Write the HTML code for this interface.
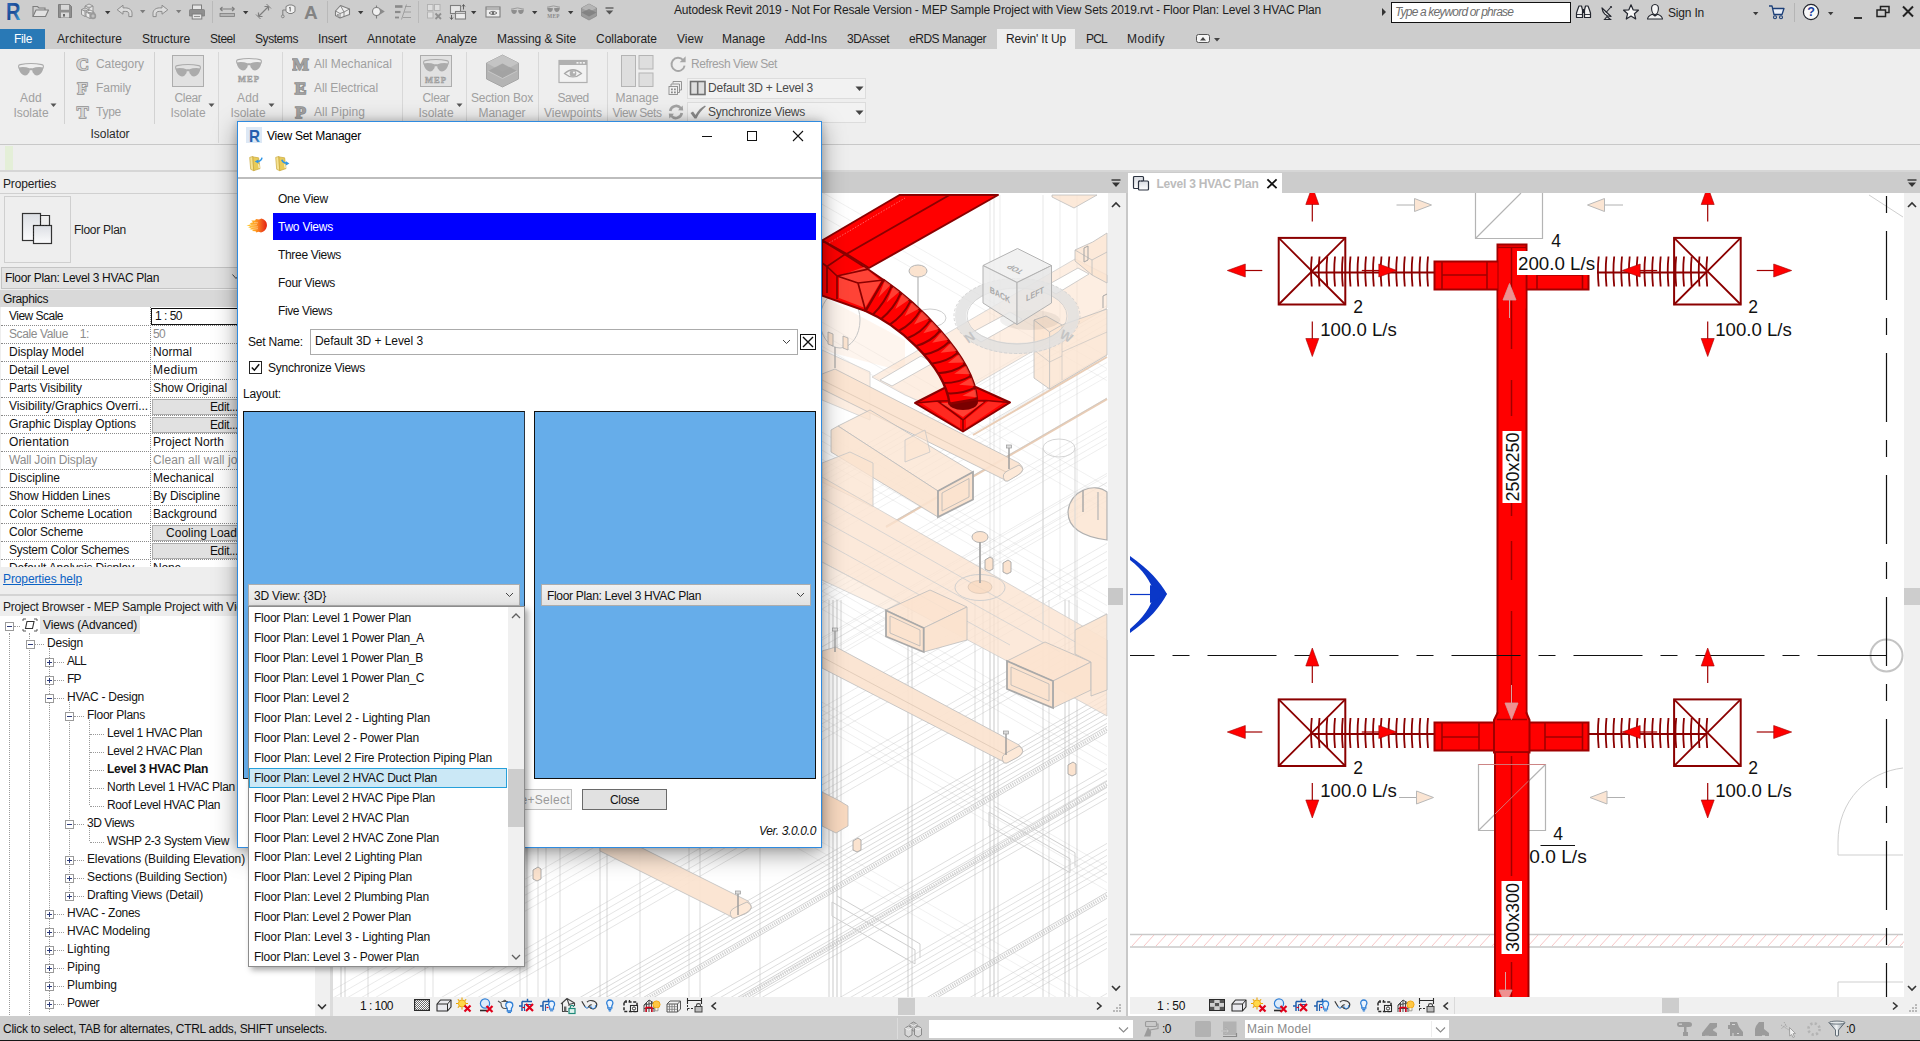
<!DOCTYPE html>
<html lang="en"><head><meta charset="utf-8"><title>Autodesk Revit 2019 - View Set Manager</title>
<style>
html,body{margin:0;padding:0;background:#cdcdcd;}
body{width:1920px;height:1041px;overflow:hidden;font-family:"Liberation Sans",sans-serif;font-size:12px;color:#1e1e1e;}
#app{position:relative;width:1920px;height:1041px;overflow:hidden;background:#cdcdcd;}
#app div,#app span.t,#app svg{position:absolute;box-sizing:border-box;}
span.t{white-space:pre;display:block;}
.dis{color:#a2a2a2;}
.clip{overflow:hidden;}

</style></head>
<body>
<div id="app">
<!-- p_chrome -->
<div style="left:0px;top:0px;width:1920px;height:49px;background:#cdcdcd;"></div>
<span class="t" style="top:2px;line-height:16px;height:16px;letter-spacing:-0.176px;left:674px;">Autodesk Revit 2019 - Not For Resale Version - MEP Sample Project with View Sets 2019.rvt - Floor Plan: Level 3 HVAC Plan</span>
<svg style="left:1380px;top:6px;" width="8" height="12" viewBox="0 0 8 12"><path d="M2 2 L6 6 L2 10 Z" fill="#333"/></svg>
<div style="left:1391px;top:2px;width:180px;height:21px;background:#fff;border:1px solid #111;"></div>
<span class="t" style="top:4px;line-height:16px;height:16px;color:#6e6e6e;font-style:italic;letter-spacing:-0.827px;left:1395px;">Type a keyword or phrase</span>
<span class="t" style="top:5px;line-height:16px;height:16px;color:#222;letter-spacing:-0.194px;left:1668px;">Sign In</span>
<div style="left:0px;top:29px;width:45px;height:20px;background:#2979b6;"></div>
<span class="t" style="top:31px;line-height:16px;height:16px;color:#fff;letter-spacing:-0.334px;left:14px;">File</span>
<div style="left:997px;top:29px;width:78px;height:21px;background:#eeeeee;"></div>
<span class="t" style="top:31px;line-height:16px;height:16px;color:#1e1e1e;letter-spacing:0.081px;left:57px;">Architecture</span>
<span class="t" style="top:31px;line-height:16px;height:16px;color:#1e1e1e;letter-spacing:-0.076px;left:142px;">Structure</span>
<span class="t" style="top:31px;line-height:16px;height:16px;color:#1e1e1e;letter-spacing:-0.470px;left:210px;">Steel</span>
<span class="t" style="top:31px;line-height:16px;height:16px;color:#1e1e1e;letter-spacing:-0.430px;left:255px;">Systems</span>
<span class="t" style="top:31px;line-height:16px;height:16px;color:#1e1e1e;letter-spacing:-0.169px;left:318px;">Insert</span>
<span class="t" style="top:31px;line-height:16px;height:16px;color:#1e1e1e;letter-spacing:0.120px;left:367px;">Annotate</span>
<span class="t" style="top:31px;line-height:16px;height:16px;color:#1e1e1e;letter-spacing:-0.242px;left:436px;">Analyze</span>
<span class="t" style="top:31px;line-height:16px;height:16px;color:#1e1e1e;letter-spacing:-0.074px;left:497px;">Massing &amp; Site</span>
<span class="t" style="top:31px;line-height:16px;height:16px;color:#1e1e1e;letter-spacing:-0.034px;left:596px;">Collaborate</span>
<span class="t" style="top:31px;line-height:16px;height:16px;color:#1e1e1e;letter-spacing:0.051px;left:677px;">View</span>
<span class="t" style="top:31px;line-height:16px;height:16px;color:#1e1e1e;letter-spacing:-0.061px;left:722px;">Manage</span>
<span class="t" style="top:31px;line-height:16px;height:16px;color:#1e1e1e;letter-spacing:0.092px;left:785px;">Add-Ins</span>
<span class="t" style="top:31px;line-height:16px;height:16px;color:#1e1e1e;letter-spacing:-0.479px;left:847px;">3DAsset</span>
<span class="t" style="top:31px;line-height:16px;height:16px;color:#1e1e1e;letter-spacing:-0.476px;left:909px;">eRDS Manager</span>
<span class="t" style="top:31px;line-height:16px;height:16px;color:#1e1e1e;letter-spacing:-0.782px;left:1086px;">PCL</span>
<span class="t" style="top:31px;line-height:16px;height:16px;color:#1e1e1e;letter-spacing:0.443px;left:1127px;">Modify</span>
<span class="t" style="top:31px;line-height:16px;height:16px;color:#1e1e1e;letter-spacing:-0.137px;left:1006px;">Revin' It Up</span>
<svg style="left:1195px;top:33px;" width="30" height="12" viewBox="0 0 30 12"><rect x="1.5" y="1.5" width="13" height="8" rx="2" fill="#f4f4f4" stroke="#555"/><path d="M5 7.5 L8 4 L11 7.5 Z" fill="#444"/><path d="M19 5 L25 5 L22 8.5 Z" fill="#444"/></svg>
<!-- p_qat -->
<svg style="left:5px;top:2px;" width="18" height="20" viewBox="0 0 18 20"><defs><linearGradient id="rlg" x1="0" y1="0" x2="1" y2="1"><stop offset="0" stop-color="#2f6fc0"/><stop offset="0.5" stop-color="#1a4a94"/><stop offset="1" stop-color="#45b6ec"/></linearGradient></defs><text x="1" y="18.2" font-family="Liberation Sans, sans-serif" font-weight="bold" font-size="23.5" fill="url(#rlg)" textLength="14.5" lengthAdjust="spacingAndGlyphs">R</text></svg>
<svg style="left:32px;top:5px;" width="18" height="13" viewBox="0 0 18 13"><path d="M1 11.5 V1.5 H5.5 L7 3 H13 V5" fill="none" stroke="#7e7e7e" stroke-width="1.1"/><path d="M1 11.5 L4 5 H16.5 L13.5 11.5 Z" fill="#e2e2e2" stroke="#7e7e7e" stroke-width="1.1" stroke-linejoin="round"/></svg>
<svg style="left:57px;top:3px;" width="16" height="16" viewBox="0 0 16 16"><path d="M1.5 1.5 H12.5 L14.5 3.5 V14.5 H1.5 Z" fill="#8f8f8f" stroke="#7e7e7e" stroke-width="1"/><rect x="4" y="1.8" width="8" height="5" fill="#d8d8d8"/><rect x="4" y="9.5" width="8" height="5" fill="#d8d8d8"/><rect x="6" y="11" width="2" height="2.6" fill="#6a6a6a"/></svg>
<svg style="left:80px;top:3px;" width="18" height="17" viewBox="0 0 18 17"><path d="M5 3 L9 1 L13 3 V8 L9 10 L5 8 Z M5 3 L9 5 L13 3 M9 5 V10" fill="#e4e4e4" stroke="#8c8c8c" stroke-width="0.9"/><path d="M1.5 6.5 L5 5 L8.5 6.5 V11.5 L5 13.5 L1.5 11.5 Z M1.5 6.5 L5 8.3 L8.5 6.5 M5 8.3 V13.5" fill="#e4e4e4" stroke="#8c8c8c" stroke-width="0.9"/><path d="M6 9 L10 7 L14 9 V13.5 L10 15.5 L6 13.5 Z M6 9 L10 11 L14 9 M10 11 V15.5" fill="#ececec" stroke="#8c8c8c" stroke-width="0.9"/><circle cx="13" cy="13" r="3.2" fill="#9a9a9a"/><path d="M11.3 13 H14.7 M13 11.3 V14.7" stroke="#ddd" stroke-width="0.7"/></svg>
<svg style="left:104.5px;top:11px;" width="6" height="4" viewBox="0 0 6 4"><path d="M0 0 H5.4 L2.7 3.2 Z" fill="#3a3a3a"/></svg>
<svg style="left:116px;top:4px;" width="18" height="14" viewBox="0 0 18 14"><path d="M1.2 5.8 L7 1.2 V3.9 H9.5 C13.5 3.9 16 6.3 16 9.2 V12.6 H12.8 V9.6 C12.8 8.2 11.6 7.4 9.8 7.4 H7 V10.2 Z" fill="#dcdcdc" stroke="#8c8c8c" stroke-width="1" stroke-linejoin="round"/></svg>
<svg style="left:139.5px;top:10px;" width="6" height="4" viewBox="0 0 6 4"><path d="M0 0 H5.4 L2.7 3.2 Z" fill="#7c7c7c"/></svg>
<svg style="left:151px;top:4px;" width="18" height="14" viewBox="0 0 18 14"><path d="M16.8 5.8 L11 1.2 V3.9 H8.5 C4.5 3.9 2 6.3 2 9.2 V12.6 H5.2 V9.6 C5.2 8.2 6.4 7.4 8.2 7.4 H11 V10.2 Z" fill="#dcdcdc" stroke="#8c8c8c" stroke-width="1" stroke-linejoin="round"/></svg>
<svg style="left:175.5px;top:10px;" width="6" height="4" viewBox="0 0 6 4"><path d="M0 0 H5.4 L2.7 3.2 Z" fill="#7c7c7c"/></svg>
<svg style="left:188px;top:4px;" width="18" height="16" viewBox="0 0 18 16"><rect x="4.5" y="1" width="9" height="5" fill="#e6e6e6" stroke="#7e7e7e" stroke-width="1"/><path d="M1.5 6.5 Q1.5 5.5 2.5 5.5 H15.5 Q16.5 5.5 16.5 6.5 V12 H1.5 Z" fill="#8f8f8f" stroke="#7e7e7e" stroke-width="0.8"/><rect x="4.2" y="10" width="9.6" height="5" fill="#e6e6e6" stroke="#7e7e7e" stroke-width="1"/><path d="M6 12.5 H12" stroke="#7e7e7e" stroke-width="0.8"/></svg>
<div style="left:212px;top:1px;width:1px;height:22px;background:#b9b9b9;"></div>
<svg style="left:219px;top:6px;" width="17" height="12" viewBox="0 0 17 12"><path d="M1 3 H15.5 M1 3 L3.5 1 M1 3 L3.5 5 M15.5 3 L13 1 M15.5 3 L13 5" fill="none" stroke="#7e7e7e" stroke-width="1.1"/><rect x="1" y="7.5" width="14.5" height="3" fill="#b5b5b5" stroke="#7e7e7e" stroke-width="0.8"/></svg>
<svg style="left:242.5px;top:11px;" width="6" height="4" viewBox="0 0 6 4"><path d="M0 0 H5.4 L2.7 3.2 Z" fill="#3a3a3a"/></svg>
<svg style="left:255px;top:3px;" width="18" height="17" viewBox="0 0 18 17"><path d="M3.5 13.5 L13.5 3.5 M3.5 13.5 V9.5 M3.5 13.5 H7.5 M13.5 3.5 V7.5 M13.5 3.5 H9.5" fill="none" stroke="#7e7e7e" stroke-width="1.2"/><path d="M1 11.5 L5.5 16 M11.5 1 L16 5.5" stroke="#7e7e7e" stroke-width="1"/></svg>
<svg style="left:280px;top:4px;" width="16" height="15" viewBox="0 0 16 15"><path d="M6 2.5 L9 1 H12 L15 2.5 V7.5 L12 9.5 H9 L6 7.5 Z" fill="#f0f0f0" stroke="#7e7e7e" stroke-width="1"/><path d="M10.2 7.5 V3.2 L9 4.2" fill="none" stroke="#555" stroke-width="0.9"/><path d="M6 6 H2.8 V11" fill="none" stroke="#7e7e7e" stroke-width="1"/><circle cx="2.8" cy="12.4" r="1.4" fill="none" stroke="#7e7e7e" stroke-width="0.9"/></svg>
<span class="t" style="top:2.5px;line-height:20px;height:20px;font-size:19px;color:#838383;font-weight:bold;left:304px;">A</span>
<div style="left:327px;top:1px;width:1px;height:22px;background:#b9b9b9;"></div>
<svg style="left:334px;top:4px;" width="17" height="15" viewBox="0 0 17 15"><path d="M1.5 7 L6.5 1.5 L15.5 5 V10.5 L6 14 L1.5 11.5 Z" fill="#ececec" stroke="#7e7e7e" stroke-width="1.1" stroke-linejoin="round"/><path d="M6.5 1.5 L10 8 L15.5 5 M10 8 V12.5 M1.5 7 L6 9.5 L10 8 M6 9.5 V14" fill="none" stroke="#7e7e7e" stroke-width="0.9"/><rect x="3" y="10" width="1.8" height="2.8" fill="#9a9a9a"/></svg>
<svg style="left:358px;top:11px;" width="6" height="4" viewBox="0 0 6 4"><path d="M0 0 H5.4 L2.7 3.2 Z" fill="#3a3a3a"/></svg>
<svg style="left:371px;top:5px;" width="15" height="14" viewBox="0 0 15 14"><circle cx="5.5" cy="6.5" r="4" fill="#f0f0f0" stroke="#7e7e7e" stroke-width="1.1"/><path d="M5.5 0.5 V2.5 M5.5 10.5 V13.5" stroke="#7e7e7e" stroke-width="1.1"/><path d="M7.5 2.5 L13.8 6.5 L7.5 10.5 C9.6 8.5 9.6 4.5 7.5 2.5 Z" fill="#8a8a8a"/></svg>
<svg style="left:394px;top:4px;" width="18" height="16" viewBox="0 0 18 16"><path d="M1 2.5 H8.5" stroke="#8a8a8a" stroke-width="2.6"/><path d="M1 8 H6.5" stroke="#8a8a8a" stroke-width="2.2"/><path d="M1 13.5 H5" stroke="#8a8a8a" stroke-width="1.8"/><path d="M11 2.5 H17 M10 8 H17 M9 13.5 H17" stroke="#9a9a9a" stroke-width="0.9"/><path d="M12.5 0.5 L7.5 15.5" stroke="#9a9a9a" stroke-width="0.9"/></svg>
<div style="left:418px;top:1px;width:1px;height:22px;background:#b9b9b9;"></div>
<svg style="left:426px;top:3px;" width="17" height="17" viewBox="0 0 17 17"><rect x="1.5" y="1.5" width="5.5" height="6" fill="#dedede" stroke="#b0b0b0" stroke-width="0.9"/><rect x="8.5" y="1.5" width="5.5" height="6" fill="#dedede" stroke="#b0b0b0" stroke-width="0.9"/><rect x="1.5" y="9" width="5.5" height="6" fill="#dedede" stroke="#b0b0b0" stroke-width="0.9"/><path d="M9.5 10.5 L15 16 M15 10.5 L9.5 16" stroke="#909090" stroke-width="1.8"/></svg>
<svg style="left:449px;top:3px;" width="18" height="17" viewBox="0 0 18 17"><rect x="1.5" y="2.5" width="10" height="8" fill="#e6e6e6" stroke="#7e7e7e" stroke-width="1.1"/><rect x="6.5" y="8.5" width="10" height="7.5" fill="#ececec" stroke="#7e7e7e" stroke-width="1.1"/><path d="M6.5 10.3 H16.5" stroke="#7e7e7e" stroke-width="1"/><path d="M14.5 6.5 V2 M13 3.5 L14.5 1.5 L16 3.5 M2.5 12 V16 M1 14.5 L2.5 16.5 L4 14.5" fill="none" stroke="#555" stroke-width="0.9"/></svg>
<svg style="left:471px;top:11px;" width="6" height="4" viewBox="0 0 6 4"><path d="M0 0 H5.4 L2.7 3.2 Z" fill="#3a3a3a"/></svg>
<svg style="left:485px;top:6px;" width="16" height="12" viewBox="0 0 16 12"><rect x="1" y="1" width="14" height="10" fill="#ededed" stroke="#7e7e7e" stroke-width="1.1"/><path d="M1 3 H15" stroke="#7e7e7e" stroke-width="1"/><path d="M4 7 Q8 3.6 12 7 Q8 10.2 4 7 Z" fill="none" stroke="#6a6a6a" stroke-width="0.9"/><circle cx="8" cy="7" r="1.2" fill="#6a6a6a"/></svg>
<svg style="left:510px;top:7px;" width="15" height="15" viewBox="0 0 15 15"><path d="M1 2.2 Q7.5 -0.3 14 2.2" fill="none" stroke="#9c9c9c" stroke-width="1"/><path d="M1.2 3 Q3 2.2 7 3.3 Q6.4 7.4 3.8 7 Q1.4 6.4 1.2 3 Z M13.8 3 Q12 2.2 8 3.3 Q8.6 7.4 11.2 7 Q13.6 6.4 13.8 3 Z" fill="#8e8e8e"/></svg>
<svg style="left:532px;top:11px;" width="6" height="4" viewBox="0 0 6 4"><path d="M0 0 H5.4 L2.7 3.2 Z" fill="#3a3a3a"/></svg>
<svg style="left:545.5px;top:5px;" width="15" height="15" viewBox="0 0 15 15"><path d="M1 2.2 Q7.5 -0.3 14 2.2" fill="none" stroke="#9c9c9c" stroke-width="1"/><path d="M1.2 3 Q3 2.2 7 3.3 Q6.4 7.4 3.8 7 Q1.4 6.4 1.2 3 Z M13.8 3 Q12 2.2 8 3.3 Q8.6 7.4 11.2 7 Q13.6 6.4 13.8 3 Z" fill="#8e8e8e"/><text x="7.5" y="13.2" text-anchor="middle" font-family="Liberation Serif, serif" font-weight="bold" font-size="5.2" fill="#8a8a8a" letter-spacing="0.3">MEP</text></svg>
<svg style="left:568px;top:11px;" width="6" height="4" viewBox="0 0 6 4"><path d="M0 0 H5.4 L2.7 3.2 Z" fill="#3a3a3a"/></svg>
<svg style="left:580px;top:3px;" width="18" height="18" viewBox="0 0 18 18"><path d="M9 1 L16.5 5 V13 L9 17 L1.5 13 V5 Z" fill="#9b9b9b" stroke="#8a8a8a" stroke-width="0.8"/><path d="M1.5 5 L9 9 L16.5 5 L9 1 Z" fill="#b5b5b5"/><path d="M1.5 9.5 L9 13.5 L16.5 9.5 L9 6 Z" fill="#7d7d7d" opacity="0.8"/></svg>
<svg style="left:605px;top:7px;" width="9" height="8" viewBox="0 0 9 8"><path d="M0.5 1 H8.5" stroke="#555" stroke-width="1.3"/><path d="M0.8 3.6 H8.2 L4.5 7.5 Z" fill="#555"/></svg>
<svg style="left:1575px;top:4px;" width="17" height="17" viewBox="0 0 17 17"><path d="M2.5 6 L4 2 H6.5 L7.5 6 V13.5 H1.5 V9 Z M14.5 6 L13 2 H10.5 L9.5 6 V13.5 H15.5 V9 Z" fill="#f2f2f2" stroke="#23262e" stroke-width="1.2" stroke-linejoin="round"/><rect x="7.2" y="5" width="2.6" height="4" fill="#23262e"/><path d="M2 10.5 H7 M10 10.5 H15" stroke="#23262e" stroke-width="0.9"/></svg>
<svg style="left:1599px;top:4px;" width="16" height="17" viewBox="0 0 16 17"><path d="M3 4 C3.5 9 7 12.5 12 12.5 Z" fill="#f2f2f2" stroke="#23262e" stroke-width="1.2" stroke-linejoin="round"/><path d="M7 8.5 L11.5 3.5" stroke="#23262e" stroke-width="1.1"/><circle cx="12" cy="3" r="1.1" fill="#23262e"/><path d="M8 12.5 L5.5 15.5 H11.5 Z" fill="none" stroke="#23262e" stroke-width="1.1"/></svg>
<svg style="left:1622px;top:3px;" width="18" height="18" viewBox="0 0 18 18"><path d="M9 1.8 L11.1 6.8 L16.4 7.2 L12.4 10.7 L13.7 16 L9 13.1 L4.3 16 L5.6 10.7 L1.6 7.2 L6.9 6.8 Z" fill="#f6f6f6" stroke="#23262e" stroke-width="1.2" stroke-linejoin="round"/></svg>
<svg style="left:1646px;top:3px;" width="18" height="18" viewBox="0 0 18 18"><path d="M1.5 16 C2 12.5 4.5 12 6.5 11.2 L9 13 L11.5 11.2 C13.5 12 16 12.5 16.5 16 Z" fill="#f2f2f2" stroke="#23262e" stroke-width="1.1" stroke-linejoin="round"/><path d="M9 1.5 C11.5 1.5 12.6 3.4 12.4 6 C12.2 9 10.6 11.5 9 11.5 C7.4 11.5 5.8 9 5.6 6 C5.4 3.4 6.5 1.5 9 1.5 Z" fill="#f6f6f6" stroke="#23262e" stroke-width="1.1"/></svg>
<svg style="left:1752.5px;top:12px;" width="6" height="4" viewBox="0 0 6 4"><path d="M0 0 H5.4 L2.7 3.2 Z" fill="#3a3a3a"/></svg>
<svg style="left:1768px;top:4px;" width="18" height="16" viewBox="0 0 18 16"><path d="M1 2 H4 L6 10.5 H14 L16 4.5 H5" fill="#e8eef7" stroke="#1c3f77" stroke-width="1.3" stroke-linejoin="round"/><circle cx="7" cy="13.3" r="1.5" fill="none" stroke="#1c3f77" stroke-width="1.1"/><circle cx="13" cy="13.3" r="1.5" fill="none" stroke="#1c3f77" stroke-width="1.1"/></svg>
<div style="left:1794px;top:3px;width:1px;height:19px;background:#b5b5b5;"></div>
<svg style="left:1802px;top:3px;" width="18" height="18" viewBox="0 0 18 18"><circle cx="9" cy="9" r="7.6" fill="#f8f8f8" stroke="#23262e" stroke-width="1.2"/><text x="9" y="13.4" text-anchor="middle" font-family="Liberation Sans, sans-serif" font-weight="bold" font-size="12.5" fill="#1a3fa0">?</text></svg>
<svg style="left:1827.5px;top:12px;" width="6" height="4" viewBox="0 0 6 4"><path d="M0 0 H5.4 L2.7 3.2 Z" fill="#3a3a3a"/></svg>
<svg style="left:1850px;top:4px;" width="68" height="16" viewBox="0 0 68 16"><path d="M4 14 H12" stroke="#222" stroke-width="1.8"/><rect x="30.5" y="2.5" width="8.5" height="6" fill="none" stroke="#222" stroke-width="1.5"/><rect x="27" y="6" width="8.5" height="6.5" fill="#cdcdcd" stroke="#222" stroke-width="1.5"/><path d="M53 2.5 L63 12.5 M63 2.5 L53 12.5" stroke="#222" stroke-width="2"/></svg>
<!-- p_ribbon -->
<div style="left:0px;top:49px;width:1920px;height:96px;background:#eeeeee;"></div>
<div style="left:0px;top:144px;width:1920px;height:1px;background:#c8c8c8;"></div>
<div style="left:0px;top:145px;width:1920px;height:26px;background:#eeeeee;"></div>
<div style="left:5px;top:146px;width:8px;height:24px;background:#e4efd8;"></div>
<div style="left:0px;top:170px;width:1920px;height:2px;background:#d6d6d6;"></div>
<div style="left:64px;top:52px;width:1px;height:72px;background:#d2d2d2;"></div>
<div style="left:154px;top:52px;width:1px;height:72px;background:#d2d2d2;"></div>
<div style="left:218px;top:52px;width:1px;height:91px;background:#d8d8d8;"></div>
<div style="left:282px;top:52px;width:1px;height:91px;background:#d8d8d8;"></div>
<div style="left:402px;top:52px;width:1px;height:91px;background:#d8d8d8;"></div>
<div style="left:466px;top:52px;width:1px;height:91px;background:#d8d8d8;"></div>
<div style="left:538px;top:52px;width:1px;height:91px;background:#d8d8d8;"></div>
<div style="left:607px;top:52px;width:1px;height:91px;background:#d8d8d8;"></div>
<span class="t" style="top:90px;line-height:16px;height:16px;color:#a0a0a0;letter-spacing:0.216px;left:20px;">Add</span>
<span class="t" style="top:105px;line-height:16px;height:16px;color:#a0a0a0;letter-spacing:-0.051px;left:13.5px;">Isolate</span>
<svg style="left:50px;top:103px;" width="7" height="5" viewBox="0 0 7 5"><path d="M0.5 0.5 L6.5 0.5 L3.5 4 Z" fill="#555"/></svg>
<span class="t" style="top:90px;line-height:16px;height:16px;color:#a0a0a0;letter-spacing:-0.335px;left:174.5px;">Clear</span>
<span class="t" style="top:105px;line-height:16px;height:16px;color:#a0a0a0;letter-spacing:-0.051px;left:170.5px;">Isolate</span>
<svg style="left:208px;top:103px;" width="7" height="5" viewBox="0 0 7 5"><path d="M0.5 0.5 L6.5 0.5 L3.5 4 Z" fill="#555"/></svg>
<span class="t" style="top:90px;line-height:16px;height:16px;color:#a0a0a0;letter-spacing:0.216px;left:237px;">Add</span>
<span class="t" style="top:105px;line-height:16px;height:16px;color:#a0a0a0;letter-spacing:-0.051px;left:230.5px;">Isolate</span>
<svg style="left:268px;top:103px;" width="7" height="5" viewBox="0 0 7 5"><path d="M0.5 0.5 L6.5 0.5 L3.5 4 Z" fill="#555"/></svg>
<span class="t" style="top:90px;line-height:16px;height:16px;color:#a0a0a0;letter-spacing:-0.335px;left:422.5px;">Clear</span>
<span class="t" style="top:105px;line-height:16px;height:16px;color:#a0a0a0;letter-spacing:-0.051px;left:418.5px;">Isolate</span>
<svg style="left:456px;top:103px;" width="7" height="5" viewBox="0 0 7 5"><path d="M0.5 0.5 L6.5 0.5 L3.5 4 Z" fill="#555"/></svg>
<span class="t" style="top:90px;line-height:16px;height:16px;color:#a0a0a0;letter-spacing:-0.185px;left:471px;">Section Box</span>
<span class="t" style="top:105px;line-height:16px;height:16px;color:#a0a0a0;letter-spacing:-0.052px;left:478.5px;">Manager</span>
<span class="t" style="top:90px;line-height:16px;height:16px;color:#a0a0a0;letter-spacing:-0.605px;left:557.5px;">Saved</span>
<span class="t" style="top:105px;line-height:16px;height:16px;color:#a0a0a0;letter-spacing:0.018px;left:544px;">Viewpoints</span>
<span class="t" style="top:90px;line-height:16px;height:16px;color:#a0a0a0;letter-spacing:-0.061px;left:615.5px;">Manage</span>
<span class="t" style="top:105px;line-height:16px;height:16px;color:#a0a0a0;letter-spacing:-0.460px;left:612.5px;">View Sets</span>
<span class="t" style="top:126px;line-height:16px;height:16px;color:#2a2a2a;letter-spacing:-0.044px;left:90.5px;">Isolator</span>
<span class="t" style="top:56px;line-height:16px;height:16px;color:#a0a0a0;letter-spacing:-0.087px;left:96px;">Category</span>
<span class="t" style="top:80px;line-height:16px;height:16px;color:#a0a0a0;letter-spacing:-0.056px;left:96px;">Family</span>
<span class="t" style="top:104px;line-height:16px;height:16px;color:#a0a0a0;letter-spacing:-0.254px;left:96px;">Type</span>
<span class="t" style="top:56px;line-height:16px;height:16px;color:#a0a0a0;letter-spacing:0.045px;left:314px;">All Mechanical</span>
<span class="t" style="top:80px;line-height:16px;height:16px;color:#a0a0a0;letter-spacing:-0.097px;left:314px;">All Electrical</span>
<span class="t" style="top:104px;line-height:16px;height:16px;color:#a0a0a0;letter-spacing:0.097px;left:314px;">All Piping</span>
<span class="t" style="top:56px;line-height:16px;height:16px;color:#a0a0a0;letter-spacing:-0.406px;left:691px;">Refresh View Set</span>
<div style="left:687px;top:78px;width:179px;height:21px;background:#f2f2f2;border:1px solid #dcdcdc;"></div>
<svg style="left:855px;top:86px;" width="9" height="6" viewBox="0 0 9 6"><path d="M0.5 0.5 L8.5 0.5 L4.5 5 Z" fill="#444"/></svg>
<div style="left:687px;top:102px;width:179px;height:21px;background:#f2f2f2;border:1px solid #dcdcdc;"></div>
<svg style="left:855px;top:110px;" width="9" height="6" viewBox="0 0 9 6"><path d="M0.5 0.5 L8.5 0.5 L4.5 5 Z" fill="#444"/></svg>
<span class="t" style="top:80px;line-height:16px;height:16px;color:#4a4a4a;letter-spacing:-0.203px;left:708px;">Default 3D + Level 3</span>
<span class="t" style="top:104px;line-height:16px;height:16px;color:#4a4a4a;letter-spacing:-0.245px;left:708px;">Synchronize Views</span>
<svg style="left:17px;top:62px;" width="28" height="16" viewBox="0 0 28 16"><path d="M2.2 6.5 Q0.6 3.2 3.2 2.6 Q14 0.4 24.8 2.6 Q27.4 3.2 25.8 6.5" fill="none" stroke="#ababab" stroke-width="1.1"/><path d="M1.6 5.4 Q7 4.2 13.2 6.4 L12.4 10.2 Q9.6 15 5.8 12.8 Q2.2 10.4 1.6 5.4 Z M26.4 5.4 Q21 4.2 14.8 6.4 L15.6 10.2 Q18.4 15 22.2 12.8 Q25.8 10.4 26.4 5.4 Z" fill="#ababab"/><path d="M13 6.4 Q14 5.4 15 6.4 L15 8.4 Q14 7.4 13 8.4 Z" fill="#ababab"/></svg>
<div style="left:172px;top:55px;width:32px;height:32px;background:#e1e1e1;border:1px solid #adadad;"></div>
<svg style="left:174px;top:63px;" width="28" height="16" viewBox="0 0 28 16"><path d="M2.2 6.5 Q0.6 3.2 3.2 2.6 Q14 0.4 24.8 2.6 Q27.4 3.2 25.8 6.5" fill="none" stroke="#ababab" stroke-width="1.1"/><path d="M1.6 5.4 Q7 4.2 13.2 6.4 L12.4 10.2 Q9.6 15 5.8 12.8 Q2.2 10.4 1.6 5.4 Z M26.4 5.4 Q21 4.2 14.8 6.4 L15.6 10.2 Q18.4 15 22.2 12.8 Q25.8 10.4 26.4 5.4 Z" fill="#ababab"/><path d="M13 6.4 Q14 5.4 15 6.4 L15 8.4 Q14 7.4 13 8.4 Z" fill="#ababab"/></svg>
<svg style="left:234.5px;top:57px;" width="28" height="16" viewBox="0 0 28 16"><path d="M2.2 6.5 Q0.6 3.2 3.2 2.6 Q14 0.4 24.8 2.6 Q27.4 3.2 25.8 6.5" fill="none" stroke="#ababab" stroke-width="1.1"/><path d="M1.6 5.4 Q7 4.2 13.2 6.4 L12.4 10.2 Q9.6 15 5.8 12.8 Q2.2 10.4 1.6 5.4 Z M26.4 5.4 Q21 4.2 14.8 6.4 L15.6 10.2 Q18.4 15 22.2 12.8 Q25.8 10.4 26.4 5.4 Z" fill="#ababab"/><path d="M13 6.4 Q14 5.4 15 6.4 L15 8.4 Q14 7.4 13 8.4 Z" fill="#ababab"/></svg>
<svg style="left:234.5px;top:75px;" width="28" height="8" viewBox="0 0 28 8"><text x="14" y="7" text-anchor="middle" font-family="Liberation Serif, serif" font-weight="bold" font-size="8.5" fill="#b5b5b5" stroke="#9a9a9a" stroke-width="0.5" letter-spacing="1">MEP</text></svg>
<div style="left:420px;top:55px;width:32px;height:32px;background:#e1e1e1;border:1px solid #adadad;"></div>
<svg style="left:422px;top:58px;" width="28" height="16" viewBox="0 0 28 16"><path d="M2.2 6.5 Q0.6 3.2 3.2 2.6 Q14 0.4 24.8 2.6 Q27.4 3.2 25.8 6.5" fill="none" stroke="#ababab" stroke-width="1.1"/><path d="M1.6 5.4 Q7 4.2 13.2 6.4 L12.4 10.2 Q9.6 15 5.8 12.8 Q2.2 10.4 1.6 5.4 Z M26.4 5.4 Q21 4.2 14.8 6.4 L15.6 10.2 Q18.4 15 22.2 12.8 Q25.8 10.4 26.4 5.4 Z" fill="#ababab"/><path d="M13 6.4 Q14 5.4 15 6.4 L15 8.4 Q14 7.4 13 8.4 Z" fill="#ababab"/></svg>
<svg style="left:422px;top:76px;" width="28" height="8" viewBox="0 0 28 8"><text x="14" y="7" text-anchor="middle" font-family="Liberation Serif, serif" font-weight="bold" font-size="8.5" fill="#b5b5b5" stroke="#9a9a9a" stroke-width="0.5" letter-spacing="1">MEP</text></svg>
<svg style="left:74px;top:56px;" width="18" height="16" viewBox="0 0 18 16"><text x="8.5" y="13.6" text-anchor="middle" font-family="Liberation Serif, serif" font-weight="bold" font-size="17.5" fill="#d6d6d6" stroke="#909090" stroke-width="1.5" paint-order="stroke">C</text></svg>
<svg style="left:74px;top:80px;" width="18" height="16" viewBox="0 0 18 16"><text x="8.5" y="13.6" text-anchor="middle" font-family="Liberation Serif, serif" font-weight="bold" font-size="17.5" fill="#d6d6d6" stroke="#909090" stroke-width="1.5" paint-order="stroke">F</text></svg>
<svg style="left:74px;top:104px;" width="18" height="16" viewBox="0 0 18 16"><text x="8.5" y="13.6" text-anchor="middle" font-family="Liberation Serif, serif" font-weight="bold" font-size="17.5" fill="#d6d6d6" stroke="#909090" stroke-width="1.5" paint-order="stroke">T</text></svg>
<svg style="left:292px;top:56px;" width="18" height="16" viewBox="0 0 18 16"><text x="8.5" y="13.6" text-anchor="middle" font-family="Liberation Serif, serif" font-weight="bold" font-size="17.5" fill="#a2a2a2" stroke="#8e8e8e" stroke-width="1.5" paint-order="stroke">M</text></svg>
<svg style="left:292px;top:80px;" width="18" height="16" viewBox="0 0 18 16"><text x="8.5" y="13.6" text-anchor="middle" font-family="Liberation Serif, serif" font-weight="bold" font-size="17.5" fill="#a2a2a2" stroke="#8e8e8e" stroke-width="1.5" paint-order="stroke">E</text></svg>
<svg style="left:292px;top:104px;" width="18" height="16" viewBox="0 0 18 16"><text x="8.5" y="13.6" text-anchor="middle" font-family="Liberation Serif, serif" font-weight="bold" font-size="17.5" fill="#a2a2a2" stroke="#8e8e8e" stroke-width="1.5" paint-order="stroke">P</text></svg>
<svg style="left:485px;top:54px;" width="35" height="34" viewBox="0 0 35 34"><path d="M17.5 1 L33.5 9 V25 L17.5 33 L1.5 25 V9 Z" fill="#b4b4b4" stroke="#a6a6a6" stroke-width="1"/><path d="M1.5 9 L17.5 17.5 L33.5 9 L17.5 1 Z" fill="#c4c4c4"/><path d="M3 17 L17.5 24.5 L32 17 L17.5 9.5 Z" fill="#a0a0a0" opacity="0.85"/><path d="M3 17 L17.5 24.5 L32 17" fill="none" stroke="#cfcfcf" stroke-width="0.8"/></svg>
<svg style="left:558px;top:59px;" width="30" height="25" viewBox="0 0 30 25"><rect x="1" y="1.5" width="28" height="22" fill="#f2f2f2" stroke="#b0b0b0" stroke-width="1.2"/><rect x="1" y="1.5" width="28" height="4.5" fill="#b0b0b0"/><rect x="18.5" y="3" width="2" height="1.6" fill="#f2f2f2"/><rect x="21.7" y="3" width="2" height="1.6" fill="#f2f2f2"/><rect x="24.9" y="3" width="2" height="1.6" fill="#f2f2f2"/><path d="M6.5 14.5 Q15 7 23.5 14.5 Q15 21.5 6.5 14.5 Z" fill="none" stroke="#a8a8a8" stroke-width="1.2"/><circle cx="15" cy="14.5" r="3.3" fill="#b0b0b0"/><circle cx="16" cy="13.5" r="1.1" fill="#f2f2f2"/></svg>
<svg style="left:620px;top:54px;" width="34" height="34" viewBox="0 0 34 34"><rect x="1.5" y="1.5" width="14" height="31" fill="#dedede" stroke="#b4b4b4" stroke-width="1"/><rect x="19" y="1.5" width="14" height="13.5" fill="#dedede" stroke="#b4b4b4" stroke-width="1"/><rect x="19" y="19" width="14" height="13.5" fill="#dedede" stroke="#b4b4b4" stroke-width="1"/></svg>
<svg style="left:669px;top:55px;" width="18" height="18" viewBox="0 0 18 18"><path d="M14.2 5.2 A6.6 6.6 0 1 0 15.6 10.6" fill="none" stroke="#a6a6a6" stroke-width="1.9"/><path d="M16.6 1.2 V7.2 H10.6 Z" fill="#a6a6a6"/></svg>
<svg style="left:668px;top:80px;" width="15" height="15" viewBox="0 0 15 15"><path d="M5 3.5 V1.5 H13.5 V10 H11.5 M3 6 V4 H11.5 V12.5 H9.5" fill="none" stroke="#8a8a8a" stroke-width="0.9"/><rect x="1" y="6.5" width="8.5" height="8" fill="#f2f2f2" stroke="#8a8a8a" stroke-width="0.9"/><path d="M3 8.5 h1.8 v1.8 h-1.8 Z M6 8.5 h1.8 v1.8 h-1.8 Z M3 11.5 h1.8 v1.8 h-1.8 Z M6 11.5 h1.8 v1.8 h-1.8 Z" fill="#8a8a8a"/></svg>
<svg style="left:668px;top:104px;" width="16" height="16" viewBox="0 0 16 16"><path d="M2.2 7 A6 6 0 0 1 12.8 4.2 M13.8 9 A6 6 0 0 1 3.2 11.8" fill="none" stroke="#a2a2a2" stroke-width="2.6"/><path d="M10 6.2 L15.2 6.6 L14.6 1.4 Z M6 9.8 L0.8 9.4 L1.4 14.6 Z" fill="#a2a2a2"/></svg>
<svg style="left:689px;top:80px;" width="18" height="16" viewBox="0 0 18 16"><rect x="1.5" y="1.5" width="14.5" height="13" fill="#dedede" stroke="#707070" stroke-width="1.6"/><path d="M8.7 1.5 V14.5" stroke="#707070" stroke-width="1.6"/></svg>
<svg style="left:689px;top:104px;" width="18" height="16" viewBox="0 0 18 16"><path d="M1.5 9 L4 7.5 L6.5 11 C9 6.5 12 3.5 16 1.5 L16.8 2.6 C13 5.5 10 9.5 7.5 14.5 H5.5 Z" fill="#8a8a8a"/></svg>
<!-- p_props -->
<div style="left:0px;top:172px;width:333px;height:844px;background:#eeeeee;"></div>
<span class="t" style="top:176px;line-height:16px;height:16px;color:#222;letter-spacing:-0.169px;left:3px;">Properties</span>
<div style="left:0px;top:193px;width:330px;height:1px;background:#d0d0d0;"></div>
<div style="left:4px;top:196px;width:67px;height:67px;background:#eeeeee;border:1px solid #cfcfcf;"></div>
<svg style="left:20px;top:211px;" width="34" height="36" viewBox="0 0 34 36"><defs><linearGradient id="fpg" x1="0" y1="0" x2="0" y2="1"><stop offset="0" stop-color="#dcdfe4"/><stop offset="1" stop-color="#fbfbfc"/></linearGradient></defs>
<rect x="2.5" y="2.5" width="18" height="27" fill="url(#fpg)" stroke="#333" stroke-width="1.2"/>
<path d="M20.5 4.5 H29.5 V14" fill="none" stroke="#333" stroke-width="1.2"/>
<rect x="13.5" y="14.5" width="18" height="18" fill="url(#fpg)" stroke="#333" stroke-width="1.2"/>
<path d="M20.5 4 V14.5 M13.5 14.5 H31.5 M13.5 14.5 V30" fill="none" stroke="#222" stroke-width="1" stroke-dasharray="1.5 1.5"/></svg>
<span class="t" style="top:222px;line-height:16px;height:16px;color:#222;letter-spacing:-0.269px;left:74px;">Floor Plan</span>
<div style="left:1px;top:267px;width:331px;height:22px;background:#e3e3e3;border:1px solid #c4c4c4;"></div>
<span class="t" style="top:270px;line-height:16px;height:16px;color:#111;letter-spacing:-0.317px;left:5px;">Floor Plan: Level 3 HVAC Plan</span>
<svg style="left:232px;top:274px;" width="8" height="6" viewBox="0 0 8 6"><path d="M0.5 0.5 L4 4.5 L7.5 0.5" fill="none" stroke="#444"/></svg>
<div style="left:0px;top:290px;width:333px;height:17px;background:#d9d9d9;"></div>
<span class="t" style="top:291px;line-height:16px;height:16px;color:#111;letter-spacing:-0.377px;left:3px;">Graphics</span>
<div style="left:1px;top:307px;width:332px;height:261px;background:#ffffff;"></div>
<span class="t" style="top:308px;line-height:16px;height:16px;color:#111;letter-spacing:-0.504px;left:153px;">1 : 50</span>
<span class="t" style="top:308px;line-height:16px;height:16px;color:#111;letter-spacing:-0.515px;left:9px;">View Scale</span>
<div style="left:1px;top:325px;width:332px;height:1px;border-top:1px dotted #8a8a8a;"></div>
<span class="t" style="top:326px;line-height:16px;height:16px;color:#8c8c8c;letter-spacing:-0.674px;left:153px;">50</span>
<span class="t" style="top:326px;line-height:16px;height:16px;color:#8c8c8c;letter-spacing:-0.382px;left:9px;">Scale Value    1:</span>
<div style="left:1px;top:343px;width:332px;height:1px;border-top:1px dotted #8a8a8a;"></div>
<span class="t" style="top:344px;line-height:16px;height:16px;color:#111;letter-spacing:0.054px;left:153px;">Normal</span>
<span class="t" style="top:344px;line-height:16px;height:16px;color:#111;letter-spacing:-0.028px;left:9px;">Display Model</span>
<div style="left:1px;top:361px;width:332px;height:1px;border-top:1px dotted #8a8a8a;"></div>
<span class="t" style="top:362px;line-height:16px;height:16px;color:#111;letter-spacing:0.386px;left:153px;">Medium</span>
<span class="t" style="top:362px;line-height:16px;height:16px;color:#111;letter-spacing:-0.225px;left:9px;">Detail Level</span>
<div style="left:1px;top:379px;width:332px;height:1px;border-top:1px dotted #8a8a8a;"></div>
<span class="t" style="top:380px;line-height:16px;height:16px;color:#111;letter-spacing:-0.054px;left:153px;">Show Original</span>
<span class="t" style="top:380px;line-height:16px;height:16px;color:#111;letter-spacing:-0.092px;left:9px;">Parts Visibility</span>
<div style="left:1px;top:397px;width:332px;height:1px;border-top:1px dotted #8a8a8a;"></div>
<div style="left:152px;top:399px;width:181px;height:16px;background:#e1e1e1;border:1px solid #adadad;"></div>
<span class="t" style="top:399px;line-height:16px;height:16px;color:#111;letter-spacing:-0.383px;left:210px;">Edit...</span>
<span class="t" style="top:398px;line-height:16px;height:16px;color:#111;letter-spacing:-0.051px;left:9px;">Visibility/Graphics Overri...</span>
<div style="left:1px;top:415px;width:332px;height:1px;border-top:1px dotted #8a8a8a;"></div>
<div style="left:152px;top:417px;width:181px;height:16px;background:#e1e1e1;border:1px solid #adadad;"></div>
<span class="t" style="top:417px;line-height:16px;height:16px;color:#111;letter-spacing:-0.383px;left:210px;">Edit...</span>
<span class="t" style="top:416px;line-height:16px;height:16px;color:#111;letter-spacing:-0.104px;left:9px;">Graphic Display Options</span>
<div style="left:1px;top:433px;width:332px;height:1px;border-top:1px dotted #8a8a8a;"></div>
<span class="t" style="top:434px;line-height:16px;height:16px;color:#111;letter-spacing:0.075px;left:153px;">Project North</span>
<span class="t" style="top:434px;line-height:16px;height:16px;color:#111;letter-spacing:0.118px;left:9px;">Orientation</span>
<div style="left:1px;top:451px;width:332px;height:1px;border-top:1px dotted #8a8a8a;"></div>
<span class="t" style="top:452px;line-height:16px;height:16px;color:#8c8c8c;letter-spacing:0.064px;left:153px;">Clean all wall joins</span>
<span class="t" style="top:452px;line-height:16px;height:16px;color:#8c8c8c;letter-spacing:-0.172px;left:9px;">Wall Join Display</span>
<div style="left:1px;top:469px;width:332px;height:1px;border-top:1px dotted #8a8a8a;"></div>
<span class="t" style="top:470px;line-height:16px;height:16px;color:#111;letter-spacing:0.030px;left:153px;">Mechanical</span>
<span class="t" style="top:470px;line-height:16px;height:16px;color:#111;letter-spacing:-0.035px;left:9px;">Discipline</span>
<div style="left:1px;top:487px;width:332px;height:1px;border-top:1px dotted #8a8a8a;"></div>
<span class="t" style="top:488px;line-height:16px;height:16px;color:#111;letter-spacing:-0.130px;left:153px;">By Discipline</span>
<span class="t" style="top:488px;line-height:16px;height:16px;color:#111;letter-spacing:-0.141px;left:9px;">Show Hidden Lines</span>
<div style="left:1px;top:505px;width:332px;height:1px;border-top:1px dotted #8a8a8a;"></div>
<span class="t" style="top:506px;line-height:16px;height:16px;color:#111;letter-spacing:-0.005px;left:153px;">Background</span>
<span class="t" style="top:506px;line-height:16px;height:16px;color:#111;letter-spacing:-0.083px;left:9px;">Color Scheme Location</span>
<div style="left:1px;top:523px;width:332px;height:1px;border-top:1px dotted #8a8a8a;"></div>
<div style="left:152px;top:525px;width:181px;height:16px;background:#e1e1e1;border:1px solid #adadad;"></div>
<span class="t" style="top:525px;line-height:16px;height:16px;color:#111;letter-spacing:0.023px;left:166px;">Cooling Load</span>
<span class="t" style="top:524px;line-height:16px;height:16px;color:#111;letter-spacing:-0.170px;left:9px;">Color Scheme</span>
<div style="left:1px;top:541px;width:332px;height:1px;border-top:1px dotted #8a8a8a;"></div>
<div style="left:152px;top:543px;width:181px;height:16px;background:#e1e1e1;border:1px solid #adadad;"></div>
<span class="t" style="top:543px;line-height:16px;height:16px;color:#111;letter-spacing:-0.383px;left:210px;">Edit...</span>
<span class="t" style="top:542px;line-height:16px;height:16px;color:#111;letter-spacing:-0.269px;left:9px;">System Color Schemes</span>
<div style="left:1px;top:559px;width:332px;height:1px;border-top:1px dotted #8a8a8a;"></div>
<span class="t" style="top:560px;line-height:16px;height:16px;color:#111;letter-spacing:-0.172px;left:153px;">None</span>
<span class="t" style="top:560px;line-height:16px;height:16px;color:#111;letter-spacing:-0.127px;left:9px;">Default Analysis Display</span>
<div style="left:1px;top:577px;width:332px;height:1px;border-top:1px dotted #8a8a8a;"></div>
<div style="left:150px;top:307px;width:1px;height:261px;border-left:1px dotted #8a8a8a;"></div>
<div style="left:151px;top:308px;width:182px;height:17px;background:#fff;border:1px solid #111;"></div>
<span class="t" style="top:308px;line-height:16px;height:16px;color:#111;letter-spacing:-0.504px;left:155px;">1 : 50</span>
<div style="left:0px;top:567px;width:333px;height:27px;background:#eeeeee;"></div>
<span class="t" style="top:571px;line-height:16px;height:16px;color:#0b62c4;letter-spacing:-0.114px;left:3px;text-decoration:underline;">Properties help</span>
<div style="left:0px;top:594px;width:333px;height:2px;background:#d4d4d4;"></div>
<!-- p_browser -->
<div style="left:0px;top:596px;width:333px;height:420px;background:#eeeeee;"></div>
<span class="t" style="top:599px;line-height:16px;height:16px;color:#222;left:3px;letter-spacing:-0.25px;">Project Browser - MEP Sample Project with View Sets 2019.rvt</span>
<div style="left:0px;top:616px;width:315px;height:400px;background:#ffffff;"></div>
<div style="left:315px;top:616px;width:15px;height:400px;background:#f0f0f0;"></div>
<svg style="left:317px;top:1003px;" width="10" height="8" viewBox="0 0 10 8"><path d="M1 1.5 L5 5.5 L9 1.5" fill="none" stroke="#333" stroke-width="1.6"/></svg>
<div style="left:9px;top:633px;width:1px;height:382px;border-left:1px dotted #9a9a9a;"></div>
<div style="left:29px;top:633px;width:1px;height:382px;border-left:1px dotted #9a9a9a;"></div>
<div style="left:49px;top:648px;width:1px;height:364px;border-left:1px dotted #9a9a9a;"></div>
<div style="left:69px;top:702px;width:1px;height:193px;border-left:1px dotted #9a9a9a;"></div>
<div style="left:89px;top:720px;width:1px;height:85px;border-left:1px dotted #9a9a9a;"></div>
<div style="left:89px;top:828px;width:1px;height:13px;border-left:1px dotted #9a9a9a;"></div>
<div style="left:40px;top:616px;width:100px;height:18px;background:#e6e6e6;"></div>
<div style="left:14px;top:626px;width:6px;height:1px;border-top:1px dotted #9a9a9a;"></div>
<svg style="left:21px;top:617px;" width="18" height="16" viewBox="0 0 18 16"><path d="M2 4 V2 H5 M13 2 H16 V4 M16 12 V14 H13 M5 14 H2 V12" fill="none" stroke="#555" stroke-width="1"/><path d="M6 4.5 H13 L11.5 11.5 H4.5 Z" fill="none" stroke="#333" stroke-width="1.1"/></svg>
<svg style="left:5px;top:622px;" width="9" height="9" viewBox="0 0 9 9"><rect x="0.5" y="0.5" width="8" height="8" fill="#fff" stroke="#9a9a9a"/><path d="M2 4.5 H7" stroke="#2c3a7a" stroke-width="1"/></svg>
<span class="t" style="top:617px;line-height:16px;height:16px;color:#111;letter-spacing:-0.156px;left:43px;">Views (Advanced)</span>
<div style="left:34.5px;top:644px;width:9.5px;height:1px;border-top:1px dotted #9a9a9a;"></div>
<svg style="left:25.5px;top:640px;" width="9" height="9" viewBox="0 0 9 9"><rect x="0.5" y="0.5" width="8" height="8" fill="#fff" stroke="#9a9a9a"/><path d="M2 4.5 H7" stroke="#2c3a7a" stroke-width="1"/></svg>
<span class="t" style="top:635px;line-height:16px;height:16px;color:#111;letter-spacing:-0.226px;left:47px;">Design</span>
<div style="left:54px;top:662px;width:10px;height:1px;border-top:1px dotted #9a9a9a;"></div>
<svg style="left:45px;top:658px;" width="9" height="9" viewBox="0 0 9 9"><rect x="0.5" y="0.5" width="8" height="8" fill="#fff" stroke="#9a9a9a"/><path d="M2 4.5 H7" stroke="#2c3a7a" stroke-width="1"/><path d="M4.5 2 V7" stroke="#2c3a7a" stroke-width="1"/></svg>
<span class="t" style="top:653px;line-height:16px;height:16px;color:#111;letter-spacing:-0.784px;left:67px;">ALL</span>
<div style="left:54px;top:680px;width:10px;height:1px;border-top:1px dotted #9a9a9a;"></div>
<svg style="left:45px;top:676px;" width="9" height="9" viewBox="0 0 9 9"><rect x="0.5" y="0.5" width="8" height="8" fill="#fff" stroke="#9a9a9a"/><path d="M2 4.5 H7" stroke="#2c3a7a" stroke-width="1"/><path d="M4.5 2 V7" stroke="#2c3a7a" stroke-width="1"/></svg>
<span class="t" style="top:671px;line-height:16px;height:16px;color:#111;letter-spacing:-0.917px;left:67px;">FP</span>
<div style="left:54px;top:698px;width:10px;height:1px;border-top:1px dotted #9a9a9a;"></div>
<svg style="left:45px;top:694px;" width="9" height="9" viewBox="0 0 9 9"><rect x="0.5" y="0.5" width="8" height="8" fill="#fff" stroke="#9a9a9a"/><path d="M2 4.5 H7" stroke="#2c3a7a" stroke-width="1"/></svg>
<span class="t" style="top:689px;line-height:16px;height:16px;color:#111;letter-spacing:-0.267px;left:67px;">HVAC - Design</span>
<div style="left:74px;top:716px;width:10px;height:1px;border-top:1px dotted #9a9a9a;"></div>
<svg style="left:65px;top:712px;" width="9" height="9" viewBox="0 0 9 9"><rect x="0.5" y="0.5" width="8" height="8" fill="#fff" stroke="#9a9a9a"/><path d="M2 4.5 H7" stroke="#2c3a7a" stroke-width="1"/></svg>
<span class="t" style="top:707px;line-height:16px;height:16px;color:#111;letter-spacing:-0.245px;left:87px;">Floor Plans</span>
<div style="left:90px;top:734px;width:14px;height:1px;border-top:1px dotted #9a9a9a;"></div>
<span class="t" style="top:725px;line-height:16px;height:16px;color:#111;letter-spacing:-0.402px;left:107px;">Level 1 HVAC Plan</span>
<div style="left:90px;top:752px;width:14px;height:1px;border-top:1px dotted #9a9a9a;"></div>
<span class="t" style="top:743px;line-height:16px;height:16px;color:#111;letter-spacing:-0.402px;left:107px;">Level 2 HVAC Plan</span>
<div style="left:90px;top:770px;width:14px;height:1px;border-top:1px dotted #9a9a9a;"></div>
<span class="t" style="top:761px;line-height:16px;height:16px;color:#111;font-weight:bold;letter-spacing:-0.283px;left:107px;">Level 3 HVAC Plan</span>
<div style="left:90px;top:788px;width:14px;height:1px;border-top:1px dotted #9a9a9a;"></div>
<span class="t" style="top:779px;line-height:16px;height:16px;color:#111;letter-spacing:-0.283px;left:107px;">North Level 1 HVAC Plan</span>
<div style="left:90px;top:806px;width:14px;height:1px;border-top:1px dotted #9a9a9a;"></div>
<span class="t" style="top:797px;line-height:16px;height:16px;color:#111;letter-spacing:-0.375px;left:107px;">Roof Level HVAC Plan</span>
<div style="left:74px;top:824px;width:10px;height:1px;border-top:1px dotted #9a9a9a;"></div>
<svg style="left:65px;top:820px;" width="9" height="9" viewBox="0 0 9 9"><rect x="0.5" y="0.5" width="8" height="8" fill="#fff" stroke="#9a9a9a"/><path d="M2 4.5 H7" stroke="#2c3a7a" stroke-width="1"/></svg>
<span class="t" style="top:815px;line-height:16px;height:16px;color:#111;letter-spacing:-0.434px;left:87px;">3D Views</span>
<div style="left:90px;top:842px;width:14px;height:1px;border-top:1px dotted #9a9a9a;"></div>
<span class="t" style="top:833px;line-height:16px;height:16px;color:#111;letter-spacing:-0.347px;left:107px;">WSHP 2-3 System View</span>
<div style="left:74px;top:860px;width:10px;height:1px;border-top:1px dotted #9a9a9a;"></div>
<svg style="left:65px;top:856px;" width="9" height="9" viewBox="0 0 9 9"><rect x="0.5" y="0.5" width="8" height="8" fill="#fff" stroke="#9a9a9a"/><path d="M2 4.5 H7" stroke="#2c3a7a" stroke-width="1"/><path d="M4.5 2 V7" stroke="#2c3a7a" stroke-width="1"/></svg>
<span class="t" style="top:851px;line-height:16px;height:16px;color:#111;letter-spacing:-0.132px;left:87px;">Elevations (Building Elevation)</span>
<div style="left:74px;top:878px;width:10px;height:1px;border-top:1px dotted #9a9a9a;"></div>
<svg style="left:65px;top:874px;" width="9" height="9" viewBox="0 0 9 9"><rect x="0.5" y="0.5" width="8" height="8" fill="#fff" stroke="#9a9a9a"/><path d="M2 4.5 H7" stroke="#2c3a7a" stroke-width="1"/><path d="M4.5 2 V7" stroke="#2c3a7a" stroke-width="1"/></svg>
<span class="t" style="top:869px;line-height:16px;height:16px;color:#111;letter-spacing:-0.126px;left:87px;">Sections (Building Section)</span>
<div style="left:74px;top:896px;width:10px;height:1px;border-top:1px dotted #9a9a9a;"></div>
<svg style="left:65px;top:892px;" width="9" height="9" viewBox="0 0 9 9"><rect x="0.5" y="0.5" width="8" height="8" fill="#fff" stroke="#9a9a9a"/><path d="M2 4.5 H7" stroke="#2c3a7a" stroke-width="1"/><path d="M4.5 2 V7" stroke="#2c3a7a" stroke-width="1"/></svg>
<span class="t" style="top:887px;line-height:16px;height:16px;color:#111;letter-spacing:-0.137px;left:87px;">Drafting Views (Detail)</span>
<div style="left:54px;top:914px;width:10px;height:1px;border-top:1px dotted #9a9a9a;"></div>
<svg style="left:45px;top:910px;" width="9" height="9" viewBox="0 0 9 9"><rect x="0.5" y="0.5" width="8" height="8" fill="#fff" stroke="#9a9a9a"/><path d="M2 4.5 H7" stroke="#2c3a7a" stroke-width="1"/><path d="M4.5 2 V7" stroke="#2c3a7a" stroke-width="1"/></svg>
<span class="t" style="top:905px;line-height:16px;height:16px;color:#111;letter-spacing:-0.289px;left:67px;">HVAC - Zones</span>
<div style="left:54px;top:932px;width:10px;height:1px;border-top:1px dotted #9a9a9a;"></div>
<svg style="left:45px;top:928px;" width="9" height="9" viewBox="0 0 9 9"><rect x="0.5" y="0.5" width="8" height="8" fill="#fff" stroke="#9a9a9a"/><path d="M2 4.5 H7" stroke="#2c3a7a" stroke-width="1"/><path d="M4.5 2 V7" stroke="#2c3a7a" stroke-width="1"/></svg>
<span class="t" style="top:923px;line-height:16px;height:16px;color:#111;letter-spacing:-0.114px;left:67px;">HVAC Modeling</span>
<div style="left:54px;top:950px;width:10px;height:1px;border-top:1px dotted #9a9a9a;"></div>
<svg style="left:45px;top:946px;" width="9" height="9" viewBox="0 0 9 9"><rect x="0.5" y="0.5" width="8" height="8" fill="#fff" stroke="#9a9a9a"/><path d="M2 4.5 H7" stroke="#2c3a7a" stroke-width="1"/><path d="M4.5 2 V7" stroke="#2c3a7a" stroke-width="1"/></svg>
<span class="t" style="top:941px;line-height:16px;height:16px;color:#111;letter-spacing:0.120px;left:67px;">Lighting</span>
<div style="left:54px;top:968px;width:10px;height:1px;border-top:1px dotted #9a9a9a;"></div>
<svg style="left:45px;top:964px;" width="9" height="9" viewBox="0 0 9 9"><rect x="0.5" y="0.5" width="8" height="8" fill="#fff" stroke="#9a9a9a"/><path d="M2 4.5 H7" stroke="#2c3a7a" stroke-width="1"/><path d="M4.5 2 V7" stroke="#2c3a7a" stroke-width="1"/></svg>
<span class="t" style="top:959px;line-height:16px;height:16px;color:#111;letter-spacing:-0.060px;left:67px;">Piping</span>
<div style="left:54px;top:986px;width:10px;height:1px;border-top:1px dotted #9a9a9a;"></div>
<svg style="left:45px;top:982px;" width="9" height="9" viewBox="0 0 9 9"><rect x="0.5" y="0.5" width="8" height="8" fill="#fff" stroke="#9a9a9a"/><path d="M2 4.5 H7" stroke="#2c3a7a" stroke-width="1"/><path d="M4.5 2 V7" stroke="#2c3a7a" stroke-width="1"/></svg>
<span class="t" style="top:977px;line-height:16px;height:16px;color:#111;letter-spacing:-0.004px;left:67px;">Plumbing</span>
<div style="left:54px;top:1004px;width:10px;height:1px;border-top:1px dotted #9a9a9a;"></div>
<svg style="left:45px;top:1000px;" width="9" height="9" viewBox="0 0 9 9"><rect x="0.5" y="0.5" width="8" height="8" fill="#fff" stroke="#9a9a9a"/><path d="M2 4.5 H7" stroke="#2c3a7a" stroke-width="1"/><path d="M4.5 2 V7" stroke="#2c3a7a" stroke-width="1"/></svg>
<span class="t" style="top:995px;line-height:16px;height:16px;color:#111;letter-spacing:-0.403px;left:67px;">Power</span>
<!-- p_view3d -->
<div style="left:333px;top:193px;width:775px;height:804px;background:#ffffff;"></div>
<svg style="left:333px;top:193px;overflow:hidden;" width="775" height="804" viewBox="333 193 775 804"><g font-family="Liberation Sans, sans-serif"><path d="M333 1140 L1107 693.4" stroke="#bdbdbd" stroke-width="1" stroke-opacity="0.55" fill="none"/><path d="M333 1145 L1107 698.4" stroke="#bdbdbd" stroke-width="1" stroke-opacity="0.55" fill="none"/><path d="M333 1150 L1107 703.4" stroke="#bdbdbd" stroke-width="1" stroke-opacity="0.55" fill="none"/><path d="M333 1155 L1107 708.4" stroke="#bdbdbd" stroke-width="1" stroke-opacity="0.55" fill="none"/><path d="M333 1160 L1107 713.4" stroke="#bdbdbd" stroke-width="1" stroke-opacity="0.55" fill="none"/><path d="M333 1165 L1107 718.4" stroke="#bdbdbd" stroke-width="1" stroke-opacity="0.55" fill="none"/><path d="M333 1170 L1107 723.4" stroke="#bdbdbd" stroke-width="1" stroke-opacity="0.55" fill="none"/><path d="M333 1215 L1107 768.4" stroke="#bdbdbd" stroke-width="1" stroke-opacity="0.5" fill="none"/><path d="M333 1221 L1107 774.4" stroke="#bdbdbd" stroke-width="1" stroke-opacity="0.5" fill="none"/><path d="M333 1227 L1107 780.4" stroke="#bdbdbd" stroke-width="1" stroke-opacity="0.5" fill="none"/><path d="M333 1233 L1107 786.4" stroke="#bdbdbd" stroke-width="1" stroke-opacity="0.5" fill="none"/><path d="M333 1239 L1107 792.4" stroke="#bdbdbd" stroke-width="1" stroke-opacity="0.5" fill="none"/><path d="M333 1245 L1107 798.4" stroke="#bdbdbd" stroke-width="1" stroke-opacity="0.5" fill="none"/><path d="M333 1290 L1107 843.4" stroke="#bdbdbd" stroke-width="1" stroke-opacity="0.45" fill="none"/><path d="M333 1296 L1107 849.4" stroke="#bdbdbd" stroke-width="1" stroke-opacity="0.45" fill="none"/><path d="M333 1302 L1107 855.4" stroke="#bdbdbd" stroke-width="1" stroke-opacity="0.45" fill="none"/><path d="M333 1308 L1107 861.4" stroke="#bdbdbd" stroke-width="1" stroke-opacity="0.45" fill="none"/><path d="M333 1314 L1107 867.4" stroke="#bdbdbd" stroke-width="1" stroke-opacity="0.45" fill="none"/><path d="M333 1320 L1107 873.4" stroke="#bdbdbd" stroke-width="1" stroke-opacity="0.45" fill="none"/><path d="M333 1060 L1107 613.4" stroke="#bdbdbd" stroke-width="1" stroke-opacity="0.4" fill="none"/><path d="M333 1067 L1107 620.4" stroke="#bdbdbd" stroke-width="1" stroke-opacity="0.4" fill="none"/><path d="M333 1074 L1107 627.4" stroke="#bdbdbd" stroke-width="1" stroke-opacity="0.4" fill="none"/><path d="M333 1081 L1107 634.4" stroke="#bdbdbd" stroke-width="1" stroke-opacity="0.4" fill="none"/><path d="M333 1088 L1107 641.4" stroke="#bdbdbd" stroke-width="1" stroke-opacity="0.4" fill="none"/><path d="M333 990 L1107 543.4" stroke="#bdbdbd" stroke-width="0.8" stroke-opacity="0.4" fill="none"/><path d="M333 998 L1107 551.4" stroke="#bdbdbd" stroke-width="0.8" stroke-opacity="0.4" fill="none"/><path d="M333 1006 L1107 559.4" stroke="#bdbdbd" stroke-width="0.8" stroke-opacity="0.4" fill="none"/><path d="M333 1014 L1107 567.4" stroke="#bdbdbd" stroke-width="0.8" stroke-opacity="0.4" fill="none"/><path d="M333 1022 L1107 575.4" stroke="#bdbdbd" stroke-width="0.8" stroke-opacity="0.4" fill="none"/><path d="M333 1365 L1107 918.4" stroke="#bdbdbd" stroke-width="1" stroke-opacity="0.45" fill="none"/><path d="M333 1371 L1107 924.4" stroke="#bdbdbd" stroke-width="1" stroke-opacity="0.45" fill="none"/><path d="M333 1377 L1107 930.4" stroke="#bdbdbd" stroke-width="1" stroke-opacity="0.45" fill="none"/><path d="M333 1383 L1107 936.4" stroke="#bdbdbd" stroke-width="1" stroke-opacity="0.45" fill="none"/><path d="M333 1389 L1107 942.4" stroke="#bdbdbd" stroke-width="1" stroke-opacity="0.45" fill="none"/><path d="M333 1395 L1107 948.4" stroke="#bdbdbd" stroke-width="1" stroke-opacity="0.45" fill="none"/><path d="M333 1440 L1107 993.4" stroke="#bdbdbd" stroke-width="1" stroke-opacity="0.4" fill="none"/><path d="M333 1447 L1107 1000.4" stroke="#bdbdbd" stroke-width="1" stroke-opacity="0.4" fill="none"/><path d="M333 1454 L1107 1007.4" stroke="#bdbdbd" stroke-width="1" stroke-opacity="0.4" fill="none"/><path d="M333 1461 L1107 1014.4" stroke="#bdbdbd" stroke-width="1" stroke-opacity="0.4" fill="none"/><path d="M333 1468 L1107 1021.4" stroke="#bdbdbd" stroke-width="1" stroke-opacity="0.4" fill="none"/><path d="M333 920 L1107 473.4" stroke="#bdbdbd" stroke-width="0.8" stroke-opacity="0.35" fill="none"/><path d="M333 929 L1107 482.4" stroke="#bdbdbd" stroke-width="0.8" stroke-opacity="0.35" fill="none"/><path d="M333 938 L1107 491.4" stroke="#bdbdbd" stroke-width="0.8" stroke-opacity="0.35" fill="none"/><path d="M333 947 L1107 500.4" stroke="#bdbdbd" stroke-width="0.8" stroke-opacity="0.35" fill="none"/><path d="M333 300 L1107 746.6" stroke="#c4c4c4" stroke-width="0.8" stroke-opacity="0.35" fill="none"/><path d="M333 309 L1107 755.6" stroke="#c4c4c4" stroke-width="0.8" stroke-opacity="0.35" fill="none"/><path d="M333 318 L1107 764.6" stroke="#c4c4c4" stroke-width="0.8" stroke-opacity="0.35" fill="none"/><path d="M333 327 L1107 773.6" stroke="#c4c4c4" stroke-width="0.8" stroke-opacity="0.35" fill="none"/><path d="M333 420 L1107 866.6" stroke="#c4c4c4" stroke-width="0.8" stroke-opacity="0.35" fill="none"/><path d="M333 428 L1107 874.6" stroke="#c4c4c4" stroke-width="0.8" stroke-opacity="0.35" fill="none"/><path d="M333 436 L1107 882.6" stroke="#c4c4c4" stroke-width="0.8" stroke-opacity="0.35" fill="none"/><path d="M333 444 L1107 890.6" stroke="#c4c4c4" stroke-width="0.8" stroke-opacity="0.35" fill="none"/><path d="M333 560 L1107 1006.6" stroke="#c4c4c4" stroke-width="0.8" stroke-opacity="0.3" fill="none"/><path d="M333 570 L1107 1016.6" stroke="#c4c4c4" stroke-width="0.8" stroke-opacity="0.3" fill="none"/><path d="M333 580 L1107 1026.6" stroke="#c4c4c4" stroke-width="0.8" stroke-opacity="0.3" fill="none"/><path d="M333 150 L1107 596.6" stroke="#c4c4c4" stroke-width="0.8" stroke-opacity="0.3" fill="none"/><path d="M333 159 L1107 605.6" stroke="#c4c4c4" stroke-width="0.8" stroke-opacity="0.3" fill="none"/><path d="M333 168 L1107 614.6" stroke="#c4c4c4" stroke-width="0.8" stroke-opacity="0.3" fill="none"/><path d="M333 177 L1107 623.6" stroke="#c4c4c4" stroke-width="0.8" stroke-opacity="0.3" fill="none"/><path d="M333 40 L1107 486.6" stroke="#c4c4c4" stroke-width="0.8" stroke-opacity="0.3" fill="none"/><path d="M333 52 L1107 498.6" stroke="#c4c4c4" stroke-width="0.8" stroke-opacity="0.3" fill="none"/><path d="M333 64 L1107 510.6" stroke="#c4c4c4" stroke-width="0.8" stroke-opacity="0.3" fill="none"/><path d="M333 -90 L1107 356.6" stroke="#c4c4c4" stroke-width="0.8" stroke-opacity="0.3" fill="none"/><path d="M333 -78 L1107 368.6" stroke="#c4c4c4" stroke-width="0.8" stroke-opacity="0.3" fill="none"/><path d="M333 -66 L1107 380.6" stroke="#c4c4c4" stroke-width="0.8" stroke-opacity="0.3" fill="none"/><path d="M822 470 L1107 305.6" stroke="#c8c8c8" stroke-width="0.8" stroke-opacity="0.4" fill="none"/><path d="M822 476 L1107 311.6" stroke="#c8c8c8" stroke-width="0.8" stroke-opacity="0.4" fill="none"/><path d="M822 482 L1107 317.6" stroke="#c8c8c8" stroke-width="0.8" stroke-opacity="0.4" fill="none"/><path d="M822 488 L1107 323.6" stroke="#c8c8c8" stroke-width="0.8" stroke-opacity="0.4" fill="none"/><path d="M822 494 L1107 329.6" stroke="#c8c8c8" stroke-width="0.8" stroke-opacity="0.4" fill="none"/><path d="M822 520 L1107 355.6" stroke="#c8c8c8" stroke-width="0.8" stroke-opacity="0.35" fill="none"/><path d="M822 527 L1107 362.6" stroke="#c8c8c8" stroke-width="0.8" stroke-opacity="0.35" fill="none"/><path d="M822 534 L1107 369.6" stroke="#c8c8c8" stroke-width="0.8" stroke-opacity="0.35" fill="none"/><path d="M822 541 L1107 376.6" stroke="#c8c8c8" stroke-width="0.8" stroke-opacity="0.35" fill="none"/><path d="M822 585 L1107 420.6" stroke="#c8c8c8" stroke-width="0.8" stroke-opacity="0.4" fill="none"/><path d="M822 591 L1107 426.6" stroke="#c8c8c8" stroke-width="0.8" stroke-opacity="0.4" fill="none"/><path d="M822 597 L1107 432.6" stroke="#c8c8c8" stroke-width="0.8" stroke-opacity="0.4" fill="none"/><path d="M822 603 L1107 438.6" stroke="#c8c8c8" stroke-width="0.8" stroke-opacity="0.4" fill="none"/><path d="M822 609 L1107 444.6" stroke="#c8c8c8" stroke-width="0.8" stroke-opacity="0.4" fill="none"/><path d="M822 640 L1107 475.6" stroke="#c8c8c8" stroke-width="0.8" stroke-opacity="0.35" fill="none"/><path d="M822 647 L1107 482.6" stroke="#c8c8c8" stroke-width="0.8" stroke-opacity="0.35" fill="none"/><path d="M822 654 L1107 489.6" stroke="#c8c8c8" stroke-width="0.8" stroke-opacity="0.35" fill="none"/><path d="M822 661 L1107 496.6" stroke="#c8c8c8" stroke-width="0.8" stroke-opacity="0.35" fill="none"/><path d="M333 1182.1 L1107 729.3" stroke="#d2d2d2" stroke-width="3.2" stroke-dasharray="1.2 1.2" fill="none"/><path d="M333 1179.1 L1107 726.3 M333 1185.1 L1107 732.3" stroke="#c6c6c6" stroke-width="0.8" fill="none"/><path d="M333 1237.1 L1107 784.3" stroke="#d2d2d2" stroke-width="3.2" stroke-dasharray="1.2 1.2" fill="none"/><path d="M333 1234.1 L1107 781.3 M333 1240.1 L1107 787.3" stroke="#c6c6c6" stroke-width="0.8" fill="none"/><path d="M333 1348.1 L1107 895.3" stroke="#d2d2d2" stroke-width="3.2" stroke-dasharray="1.2 1.2" fill="none"/><path d="M333 1345.1 L1107 892.3 M333 1351.1 L1107 898.3" stroke="#c6c6c6" stroke-width="0.8" fill="none"/><path d="M341 600 V997" stroke="#bcbcbc" stroke-width="1" stroke-opacity="0.7"/><path d="M345 600 V997" stroke="#bcbcbc" stroke-width="1" stroke-opacity="0.6"/><path d="M368 600 V997" stroke="#bcbcbc" stroke-width="1" stroke-opacity="0.5"/><path d="M425 600 V997" stroke="#bcbcbc" stroke-width="1" stroke-opacity="0.45"/><path d="M433 600 V997" stroke="#bcbcbc" stroke-width="1" stroke-opacity="0.45"/><path d="M520 600 V997" stroke="#bcbcbc" stroke-width="1" stroke-opacity="0.5"/><path d="M527 600 V997" stroke="#bcbcbc" stroke-width="1" stroke-opacity="0.5"/><path d="M538 600 V997" stroke="#bcbcbc" stroke-width="1" stroke-opacity="0.5"/><path d="M546 600 V997" stroke="#bcbcbc" stroke-width="1" stroke-opacity="0.5"/><path d="M560 600 V997" stroke="#bcbcbc" stroke-width="1" stroke-opacity="0.5"/><path d="M600 600 V997" stroke="#bcbcbc" stroke-width="1" stroke-opacity="0.6"/><path d="M607 600 V997" stroke="#bcbcbc" stroke-width="1" stroke-opacity="0.6"/><path d="M640 600 V997" stroke="#bcbcbc" stroke-width="1" stroke-opacity="0.5"/><path d="M689 600 V997" stroke="#bcbcbc" stroke-width="1" stroke-opacity="0.5"/><path d="M700 600 V997" stroke="#bcbcbc" stroke-width="1" stroke-opacity="0.55"/><path d="M760 600 V997" stroke="#bcbcbc" stroke-width="1" stroke-opacity="0.5"/><path d="M829 600 V997" stroke="#bcbcbc" stroke-width="1" stroke-opacity="0.7"/><path d="M833 600 V997" stroke="#bcbcbc" stroke-width="1" stroke-opacity="0.8"/><path d="M837 600 V997" stroke="#bcbcbc" stroke-width="1" stroke-opacity="0.8"/><path d="M841 600 V997" stroke="#bcbcbc" stroke-width="1" stroke-opacity="0.6"/><path d="M908 600 V997" stroke="#bcbcbc" stroke-width="1" stroke-opacity="0.7"/><path d="M912 600 V997" stroke="#bcbcbc" stroke-width="1" stroke-opacity="0.7"/><path d="M975 600 V997" stroke="#bcbcbc" stroke-width="1" stroke-opacity="0.5"/><path d="M983 600 V997" stroke="#bcbcbc" stroke-width="1" stroke-opacity="0.5"/><path d="M990 600 V997" stroke="#bcbcbc" stroke-width="1" stroke-opacity="0.8"/><path d="M994 600 V997" stroke="#bcbcbc" stroke-width="1" stroke-opacity="0.8"/><path d="M998 600 V997" stroke="#bcbcbc" stroke-width="1" stroke-opacity="0.6"/><path d="M1043 600 V997" stroke="#bcbcbc" stroke-width="1" stroke-opacity="0.6"/><path d="M1049 600 V997" stroke="#bcbcbc" stroke-width="1" stroke-opacity="0.5"/><path d="M1065 600 V997" stroke="#bcbcbc" stroke-width="1" stroke-opacity="0.7"/><path d="M1069 600 V997" stroke="#bcbcbc" stroke-width="1" stroke-opacity="0.6"/><path d="M1077 600 V997" stroke="#bcbcbc" stroke-width="1" stroke-opacity="0.6"/><path d="M990 195 V600" stroke="#c4c4c4" stroke-width="1" stroke-opacity="0.45"/><path d="M994 195 V600" stroke="#c4c4c4" stroke-width="1" stroke-opacity="0.45"/><path d="M1043 195 V600" stroke="#c4c4c4" stroke-width="1" stroke-opacity="0.4"/><path d="M1077 195 V600" stroke="#c4c4c4" stroke-width="1" stroke-opacity="0.4"/><path d="M1000 195 V600" stroke="#c4c4c4" stroke-width="1" stroke-opacity="0.3"/><path d="M1060 195 V600" stroke="#c4c4c4" stroke-width="1" stroke-opacity="0.3"/><path d="M822 296 L905 340 L905 372 L822 350 Z" fill="#fbe3cf" fill-opacity="0.35" stroke="none" stroke-width="0.8" stroke-linejoin="round"/><path d="M822 350 L870 372 L870 420 L822 400 Z" fill="#fbe3cf" fill-opacity="0.6" stroke="#d0d0d0" stroke-width="0.8" stroke-linejoin="round"/><path d="M872 377 L1075 259 L1107 275 L1107 308 L935 408 L905 395 Z" fill="#fbe3cf" fill-opacity="0.6" stroke="#c8c8c8" stroke-width="0.7" stroke-linejoin="round"/><path d="M880 380 L921 356 L933 363 L892 386 Z M969 334 L1010 312 L1022 319 L981 342 Z M1044 287 L1078 268 L1089 274 L1056 294 Z" fill="#fff" fill-opacity="0.95" stroke="#bcbcbc" stroke-width="0.7"/><path d="M886 527 L1107 399" fill="none" stroke="#e9cdb6" stroke-width="2.2" stroke-opacity="1"/><path d="M886 526 L1107 398" fill="none" stroke="#c4c4c4" stroke-width="0.6" stroke-opacity="1"/><path d="M973 435 L1107 357" fill="none" stroke="#e9cdb6" stroke-width="2" stroke-opacity="1"/><path d="M993 420 L1107 354" fill="none" stroke="#cccccc" stroke-width="0.6" stroke-opacity="1"/><path d="M1034 320 L1046 316 L1062 325 L1107 309 L1107 355 L1049.6 389 L1034 378 Z" fill="#fbe3cf" fill-opacity="0.8" stroke="#bdbdbd" stroke-width="0.8" stroke-linejoin="round"/><path d="M1034 320 L1049.6 332 L1049.6 389" fill="none" stroke="#bdbdbd" stroke-width="0.8" stroke-opacity="1"/><path d="M1049.6 332 L1062 325" fill="none" stroke="#bdbdbd" stroke-width="0.8" stroke-opacity="1"/><path d="M1062 325 L1062 380" fill="none" stroke="#bdbdbd" stroke-width="0.8" stroke-opacity="0.7"/><path d="M1062 352 L1107 332" fill="none" stroke="#bdbdbd" stroke-width="0.8" stroke-opacity="0.7"/><path d="M1034 350 L1049.6 362 L1062 356" fill="none" stroke="#bdbdbd" stroke-width="0.8" stroke-opacity="0.7"/><path d="M1075 250 L1092.7 242 L1107 233 L1107 283 L1092 275 L1075 261 Z" fill="#fbe3cf" fill-opacity="0.8" stroke="#bdbdbd" stroke-width="0.8" stroke-linejoin="round"/><path d="M1075 250 L1092 260 L1092 275" fill="none" stroke="#bdbdbd" stroke-width="0.8" stroke-opacity="1"/><path d="M1092 260 L1107 252" fill="none" stroke="#bdbdbd" stroke-width="0.8" stroke-opacity="1"/><path d="M1052 195 L1097 195 L1074 208 L1052 197 Z" fill="#fbe3cf" fill-opacity="0.8" stroke="#bdbdbd" stroke-width="0.8" stroke-linejoin="round"/><path d="M1084 248 L1088 246 L1088 260 L1084 262 L1084 248" fill="none" stroke="#a5a5a5" stroke-width="1" stroke-opacity="1"/><path d="M1103 296 L1107 294" fill="none" stroke="#a5a5a5" stroke-width="1" stroke-opacity="1"/><path d="M1103 296 L1103 308" fill="none" stroke="#a5a5a5" stroke-width="1" stroke-opacity="1"/><path d="M822 374 L835 369 L1019 463 Q1027 470 1018 475 L1007 481 L822 389 Z" fill="#fbe3cf" fill-opacity="0.92" stroke="#bdbdbd" stroke-width="0.8"/><path d="M822 380 L1010 474" fill="none" stroke="#d9c3b0" stroke-width="0.7" stroke-opacity="1"/><path d="M1005 481 Q1000 474 1009 470 L1019 465 Q1027 469 1018 475 L1008 481 Z" fill="#fde9d8" stroke="#b5b5b5" stroke-width="0.8"/><path d="M838 426 L870 410 L973 472 L938 491 Z" fill="#fbe3cf" fill-opacity="0.75" stroke="#bdbdbd" stroke-width="0.8" stroke-linejoin="round"/><path d="M838 426 L938 491 L938 517 L831 452 L831 430 Z" fill="#fbe3cf" fill-opacity="0.9" stroke="#bdbdbd" stroke-width="0.8" stroke-linejoin="round"/><path d="M938 491 L973 472 L973 499.5 L938 517 Z" fill="#fbe3cf" stroke="#a9a9a9" stroke-width="1.8"/><path d="M942 493 L969 478.5 L969 497 L942 511 Z" fill="none" stroke="#b5b5b5" stroke-width="0.8"/><path d="M905 440 L925 430 L930 452 L905 462 Z" fill="#fbe3cf" fill-opacity="0.5" stroke="#c8c8c8" stroke-width="0.8" stroke-linejoin="round"/><path d="M822 463 L850 452 L873 463 L873 507 L822 482 Z" fill="#fbe3cf" fill-opacity="0.75" stroke="#c6c6c6" stroke-width="0.8" stroke-linejoin="round"/><path d="M822 477 L1107 640 L1107 716 L1007 661 L822 562 Z" fill="#fbe3cf" fill-opacity="0.78" stroke="#c9c9c9" stroke-width="0.7" stroke-linejoin="round"/><path d="M822 498 L1107 660" fill="none" stroke="#cfcfcf" stroke-width="0.8" stroke-opacity="1"/><path d="M822 520 L1060 652" fill="none" stroke="#cfcfcf" stroke-width="0.8" stroke-opacity="1"/><path d="M822 541 L1010 645" fill="none" stroke="#cfcfcf" stroke-width="0.8" stroke-opacity="1"/><path d="M822 562 L900 603 L886 610 L822 580 Z" fill="#fbe3cf" fill-opacity="0.55" stroke="#d0d0d0" stroke-width="0.8" stroke-linejoin="round"/><path d="M886 610 L930 590 L967 607 L923.7 628 Z" fill="#fbe3cf" fill-opacity="0.85" stroke="#bdbdbd" stroke-width="0.8" stroke-linejoin="round"/><path d="M923.7 628 L967 607 L967 640 L923.7 652 Z" fill="#fbe3cf" fill-opacity="0.95" stroke="#bdbdbd" stroke-width="0.8" stroke-linejoin="round"/><path d="M886 610.5 L923.7 628 L923.7 652 L886 636.5 Z" fill="#fbe3cf" stroke="#a9a9a9" stroke-width="1.8"/><path d="M890 616 L920 630 L920 646 L890 633 Z" fill="none" stroke="#b5b5b5" stroke-width="0.8"/><path d="M1007 661 L1045 642 L1091 662 L1053 681 Z" fill="#fbe3cf" fill-opacity="0.85" stroke="#bdbdbd" stroke-width="0.8" stroke-linejoin="round"/><path d="M1053 681 L1091 662 L1091 690 L1053 708 Z" fill="#fbe3cf" fill-opacity="0.95" stroke="#bdbdbd" stroke-width="0.8" stroke-linejoin="round"/><path d="M1007 661 L1053 681 L1053 708 L1007 689 Z" fill="#fbe3cf" stroke="#a9a9a9" stroke-width="1.8"/><path d="M1011 667 L1049 684 L1049 701 L1011 685 Z" fill="none" stroke="#b5b5b5" stroke-width="0.8"/><path d="M1075 630 L1107 614 L1107 690 L1091 696 L1091 662 L1075 654 Z" fill="#fbe3cf" fill-opacity="0.9" stroke="#bdbdbd" stroke-width="0.8" stroke-linejoin="round"/><path d="M1068 512 C1070 490 1095 482 1107 492 L1107 540 C1092 538 1068 532 1068 512 Z" fill="#fbe3cf" fill-opacity="0.8" stroke="#b0b0b0" stroke-width="1.2"/><path d="M1083 490 L1083 512" fill="none" stroke="#a5a5a5" stroke-width="1.4" stroke-opacity="1"/><path d="M1098 492 L1098 520" fill="none" stroke="#b5b5b5" stroke-width="1.2" stroke-opacity="1"/><path d="M822 651 L836 647 L1019 745 Q1027 752 1018 757 L1006 763 L822 668 Z" fill="#fbe3cf" fill-opacity="0.92" stroke="#bdbdbd" stroke-width="0.8"/><path d="M822 657 L1008 756" fill="none" stroke="#d9c3b0" stroke-width="0.7" stroke-opacity="1"/><path d="M1004 763 Q999 756 1008 752 L1019 746 Q1027 751 1018 757 L1007 763 Z" fill="#fde9d8" stroke="#b5b5b5" stroke-width="0.8"/><path d="M600 838 L614 834 L748 901 Q756 909 745 914 L734 918 L600 851 Z" fill="#fbe3cf" fill-opacity="0.92" stroke="#bdbdbd" stroke-width="0.8"/><path d="M732 918 Q727 911 736 907 L747 902 Q756 907 746 913 L735 918 Z" fill="#fde9d8" stroke="#b5b5b5" stroke-width="0.8"/><path d="M822 792 L838 800 L848 806 L848 826 L836 833 L822 826 Z" fill="#f8d9c0" stroke="#b9b9b9" stroke-width="0.8"/><path d="M1009 447 V469" stroke="#9a9a9a" stroke-width="1.4"/><rect x="1006.5" y="445" width="5" height="3" fill="#ddd" stroke="#999" stroke-width="0.7"/><path d="M1006 733 V755" stroke="#9a9a9a" stroke-width="1.4"/><rect x="1003.5" y="731" width="5" height="3" fill="#ddd" stroke="#999" stroke-width="0.7"/><path d="M738 893 V915" stroke="#9a9a9a" stroke-width="1.4"/><rect x="735.5" y="891" width="5" height="3" fill="#ddd" stroke="#999" stroke-width="0.7"/><path d="M835 630 V652" stroke="#9a9a9a" stroke-width="1.4"/><rect x="832.5" y="628" width="5" height="3" fill="#ddd" stroke="#999" stroke-width="0.7"/><path d="M853 841 l5 -3 l3 2 v10 l-4 2 l-4 -2 Z" fill="#fbe3cf" stroke="#a5a5a5" stroke-width="0.9"/><path d="M1068 765 l5 -3 l3 2 v10 l-4 2 l-4 -2 Z" fill="#fbe3cf" stroke="#a5a5a5" stroke-width="0.9"/><path d="M533 870 l5 -3 l3 2 v10 l-4 2 l-4 -2 Z" fill="#fbe3cf" stroke="#a5a5a5" stroke-width="0.9"/><path d="M985 560 l5 -3 l3 2 v10 l-4 2 l-4 -2 Z" fill="#fbe3cf" stroke="#a5a5a5" stroke-width="0.9"/><path d="M1003 563 l5 -3 l3 2 v10 l-4 2 l-4 -2 Z" fill="#fbe3cf" stroke="#a5a5a5" stroke-width="0.9"/><ellipse cx="918" cy="271" rx="9" ry="6" fill="#fbe3cf" stroke="#b5b5b5"/><path d="M918 277 V310" stroke="#b5b5b5" stroke-width="1.2"/><ellipse cx="930" cy="318" rx="16" ry="9" fill="none" stroke="#cfcfcf"/><ellipse cx="980" cy="587.5" rx="25" ry="13" fill="none" stroke="#cfcfcf"/><ellipse cx="980" cy="587" rx="12" ry="6.5" fill="#f8d9c0" fill-opacity="0.8" stroke="#d0c0b0" stroke-width="0.6"/><ellipse cx="980" cy="537" rx="8" ry="5.5" fill="#fbe3cf" stroke="#b5b5b5"/><path d="M980 542 V583" stroke="#a5a5a5" stroke-width="1.8"/><ellipse cx="840" cy="320" rx="20" ry="28" fill="none" stroke="#c5c5c5" stroke-width="1"/><path d="M828 332 v12 l5 2 v-12 Z M843 336 v12 l5 2 v-12 Z" fill="#fbe3cf" stroke="#aaa" stroke-width="0.8"/><path d="M835 347 V368" stroke="#a5a5a5" stroke-width="1.2"/><ellipse cx="1059" cy="448" rx="16" ry="9" fill="none" stroke="#d5d5d5"/><path d="M1043 448 V630 M1075 448 V630" stroke="#d5d5d5" stroke-width="0.9"/><path d="M989 812 L1070 858.7 L1070 872.7 L989 826 Z M994 806 L1075 852.7 L1075 866.7" fill="none" stroke="#cfcfcf" stroke-width="1"/><path d="M832 902 L915 949.9 L915 963.9 L832 916 Z M837 896 L920 943.9 L920 957.9" fill="none" stroke="#cfcfcf" stroke-width="1"/><ellipse cx="1017" cy="316" rx="56.5" ry="32.5" fill="none" stroke="#e0e0e0" stroke-width="11" stroke-opacity="0.8"/><ellipse cx="1017" cy="316" rx="63" ry="37.5" fill="none" stroke="#cdcdcd" stroke-width="0.8" stroke-dasharray="3 2"/><ellipse cx="1017" cy="316" rx="50" ry="28" fill="none" stroke="#cdcdcd" stroke-width="0.8"/><ellipse cx="1030" cy="320" rx="30" ry="10" fill="#000" fill-opacity="0.06"/><path d="M983 265.5 L1017.5 248.5 L1051.5 265.5 L1017 282.5 Z" fill="#eeeeee" fill-opacity="0.82" stroke="#b3b3b3" stroke-width="1"/><path d="M983 265.5 L1017 282.5 L1017 324.5 L983 303 Z" fill="#e9e9e9" fill-opacity="0.82" stroke="#b3b3b3" stroke-width="1"/><path d="M1017 282.5 L1051.5 265.5 L1051.5 303 L1017 324.5 Z" fill="#e4e4e4" fill-opacity="0.82" stroke="#b3b3b3" stroke-width="1"/><text transform="translate(1017.5 267.5) rotate(206) skewX(-28)" text-anchor="middle" font-size="7.5" fill="#a9a9a9" font-weight="bold">TOP</text><text transform="translate(1000 298) rotate(28) skewX(28)" text-anchor="middle" font-size="8" fill="#a9a9a9" font-weight="bold">BACK</text><text transform="translate(1035 297) rotate(-27) skewX(-27)" text-anchor="middle" font-size="8" fill="#a9a9a9" font-weight="bold">LEFT</text><text transform="translate(972 341) rotate(-35)" text-anchor="middle" font-size="13" fill="#c4c4c4" font-weight="bold">N</text><text transform="translate(1064 340) rotate(30)" text-anchor="middle" font-size="13" fill="#c4c4c4" font-weight="bold">W</text><path d="M822 240.5 L899.5 195 L998 195 L869 268 L846.5 254 Z" fill="#ff0000" stroke="#8b0000" stroke-width="2" stroke-linejoin="round"/><path d="M846.5 254 L949.5 195" stroke="#8b0000" stroke-width="2" fill="none"/><path d="M824 246 L905 198" stroke="#ff9a9a" stroke-width="0.8" stroke-dasharray="1.5 1.5" fill="none" opacity="0.8"/><path d="M822 240.5 L845 254.3 L868 269.2 L883.6 280 L865.6 311 L822 295.6 Z" fill="#ff0000" stroke="#8b0000" stroke-width="2" stroke-linejoin="round"/><path d="M839 276 L864 267 L881 281 L865 308 L839 298 Z" fill="#ff5a48" fill-opacity="0.75"/><path d="M845 254.3 L827 266.5 V293 M822 263 L827 266.5 M868 269.2 L837 276 V299 M837 276 L827 266.5 M837 276 L858 283 L865.6 311 M858 283 L883.6 280" fill="none" stroke="#8b0000" stroke-width="1.7" stroke-linejoin="round"/><path d="M915 403 L960 380 L1010 402.5 L963 431.5 Z" fill="#ff0000" stroke="#8b0000" stroke-width="2" stroke-linejoin="round"/><path d="M915 403 L938 401 L986 400.5 L1010 402.5 M938 401 L963 420 L986 400.5 M963 420 V431" fill="none" stroke="#8b0000" stroke-width="1.6"/><path d="M941 403 L984 402 L963 417 Z" fill="#ff5a48" fill-opacity="0.7"/><path d="M922 403.5 L937 402 L960 419 L960 428 Z M1003 403 L988 401.5 L966 419 L966 428 Z" fill="#ff5a48" fill-opacity="0.45"/><ellipse cx="963" cy="402" rx="15" ry="8" fill="#7a0000"/><path d="M883.6 280 C914 301 973 354 977 399 L949.6 403.7 C943.6 361.7 893.6 323 865.6 311 Z" fill="#ff0000" stroke="#8b0000" stroke-width="2.4" stroke-linejoin="round"/><path d="M884.8 280.8 L890.5 284.9 L878.3 297.4 Z M893.1 286.9 L899.4 291.8 L886.5 302.6 Z M902.2 294.1 L909.0 299.8 L895.3 308.9 Z M911.9 302.4 L918.9 308.8 L904.6 316.2 Z M921.9 311.6 L929.0 318.5 L914.0 324.4 Z M931.9 321.6 L938.8 328.9 L923.3 333.2 Z M941.6 332.1 L948.1 339.8 L932.2 342.7 Z M950.7 343.2 L956.6 351.1 L940.5 352.7 Z M958.9 354.5 L964.0 362.6 L947.9 363.1 Z M966.0 366.1 L970.0 374.3 L954.2 373.8 Z M971.5 377.8 L974.4 385.9 L959.1 384.8 Z M975.4 389.3 L976.8 397.3 L962.4 395.7 Z " fill="#ff5a48" fill-opacity="0.7"/><path d="M891.7 285.9 Q885.2 302.4 873.0 314.5 M900.8 293.0 Q894.0 308.6 881.1 319.1 M910.5 301.1 Q903.3 315.7 889.7 324.6 M920.4 310.2 Q912.7 323.7 898.5 331.0 M930.4 320.0 Q922.1 332.5 907.3 338.2 M940.2 330.5 Q931.1 341.8 915.9 346.1 M949.4 341.5 Q939.5 351.7 924.0 354.6 M957.8 352.8 Q947.0 362.0 931.4 363.7 M965.0 364.4 Q953.5 372.6 937.9 373.2 M970.8 376.0 Q958.5 383.3 943.2 383.1 M974.9 387.6 Q962.0 394.2 947.2 393.3 " stroke="#8b0000" stroke-width="2" fill="none"/></g></svg>
<div style="left:1108px;top:193px;width:18px;height:804px;background:#f0f0f0;"></div>
<div style="left:1126px;top:193px;width:2px;height:823px;background:#c8c8c8;"></div>
<svg style="left:1111px;top:201px;" width="10" height="8" viewBox="0 0 10 8"><path d="M1 6 L5 2 L9 6" fill="none" stroke="#333" stroke-width="1.6"/></svg>
<svg style="left:1111px;top:984px;" width="10" height="8" viewBox="0 0 10 8"><path d="M1 2 L5 6 L9 2" fill="none" stroke="#333" stroke-width="1.6"/></svg>
<div style="left:1108px;top:588px;width:15px;height:17px;background:#c8c8c8;"></div>
<div style="left:333px;top:997px;width:793px;height:19px;background:#f0f0f0;"></div>
<span class="t" style="top:998px;line-height:16px;height:16px;color:#111;letter-spacing:-0.528px;left:360px;">1 : 100</span>
<svg style="left:709px;top:1001px;" width="10" height="10" viewBox="0 0 10 10"><path d="M7 1.5 L3 5 L7 8.5" fill="none" stroke="#333" stroke-width="1.6"/></svg>
<svg style="left:1094px;top:1001px;" width="10" height="10" viewBox="0 0 10 10"><path d="M3 1.5 L7 5 L3 8.5" fill="none" stroke="#333" stroke-width="1.6"/></svg>
<div style="left:898px;top:998px;width:17px;height:17px;background:#cdcdcd;"></div>
<div style="left:330px;top:172px;width:3px;height:844px;background:#dcdcdc;"></div>
<!-- p_plan -->
<div style="left:333px;top:172px;width:1587px;height:21px;background:#cccccc;"></div>
<svg style="left:1111px;top:179px;" width="10" height="9" viewBox="0 0 10 9"><path d="M0.5 1 H9.5" stroke="#333" stroke-width="1.4"/><path d="M1 3.5 H9 L5 8 Z" fill="#333"/></svg>
<svg style="left:1907px;top:179px;" width="10" height="9" viewBox="0 0 10 9"><path d="M0.5 1 H9.5" stroke="#333" stroke-width="1.4"/><path d="M1 3.5 H9 L5 8 Z" fill="#333"/></svg>
<div style="left:1128px;top:173px;width:154px;height:20px;background:#ffffff;"></div>
<svg style="left:1132px;top:175px;" width="18" height="16" viewBox="0 0 18 16"><defs><linearGradient id="tig" x1="0" y1="0" x2="0" y2="1"><stop offset="0" stop-color="#d9dce2"/><stop offset="1" stop-color="#ffffff"/></linearGradient></defs><rect x="1.5" y="1.5" width="10" height="12" rx="1" fill="url(#tig)" stroke="#2c3340" stroke-width="1.2"/><rect x="6.5" y="6" width="10" height="9" rx="1" fill="url(#tig)" stroke="#2c3340" stroke-width="1.2"/><path d="M6.5 6 H11.5 M6.5 6 V13.5 M11.5 2 V6" fill="none" stroke="#2c3340" stroke-width="1" stroke-dasharray="1.5 1.2"/></svg>
<span class="t" style="top:176px;line-height:16px;height:16px;color:#bcbcbc;font-weight:bold;letter-spacing:-0.225px;left:1156.5px;">Level 3 HVAC Plan</span>
<svg style="left:1266px;top:178px;" width="12" height="12" viewBox="0 0 12 12"><path d="M1.4 1.4 L10.6 10.2 M10.6 1.4 L1.4 10.2" stroke="#111" stroke-width="1.8"/></svg>
<div style="left:1128px;top:193px;width:792px;height:823px;background:#ffffff;"></div>
<svg style="left:1130px;top:193px;overflow:hidden;" width="774" height="804" viewBox="1130 193 774 804"><g font-family="Liberation Sans, sans-serif" fill="#111"><circle cx="1886.5" cy="655.5" r="16" fill="none" stroke="#c4c4c4" stroke-width="2"/><path d="M1869 195 L1903 217" stroke="#cfcfcf" stroke-width="1" fill="none"/><path d="M1838 855 V842 C1838 800 1868 772 1903 768 M1838 855 H1903" stroke="#cfcfcf" stroke-width="1" fill="none"/><path d="M1838 997 V982 H1903" stroke="#cfcfcf" stroke-width="1" fill="none"/><path d="M1130 934.5 H1903 M1130 947 H1903" stroke="#c9c9c9" stroke-width="1.6" fill="none"/><path d="M1132 946 l10 -11 M1144 946 l10 -11 M1156 946 l10 -11 M1168 946 l10 -11 M1180 946 l10 -11 M1192 946 l10 -11 M1204 946 l10 -11 M1216 946 l10 -11 M1228 946 l10 -11 M1240 946 l10 -11 M1252 946 l10 -11 M1264 946 l10 -11 M1276 946 l10 -11 M1288 946 l10 -11 M1300 946 l10 -11 M1312 946 l10 -11 M1324 946 l10 -11 M1336 946 l10 -11 M1348 946 l10 -11 M1360 946 l10 -11 M1372 946 l10 -11 M1384 946 l10 -11 M1396 946 l10 -11 M1408 946 l10 -11 M1420 946 l10 -11 M1432 946 l10 -11 M1444 946 l10 -11 M1456 946 l10 -11 M1468 946 l10 -11 M1480 946 l10 -11 M1492 946 l10 -11 M1504 946 l10 -11 M1516 946 l10 -11 M1528 946 l10 -11 M1540 946 l10 -11 M1552 946 l10 -11 M1564 946 l10 -11 M1576 946 l10 -11 M1588 946 l10 -11 M1600 946 l10 -11 M1612 946 l10 -11 M1624 946 l10 -11 M1636 946 l10 -11 M1648 946 l10 -11 M1660 946 l10 -11 M1672 946 l10 -11 M1684 946 l10 -11 M1696 946 l10 -11 M1708 946 l10 -11 M1720 946 l10 -11 M1732 946 l10 -11 M1744 946 l10 -11 M1756 946 l10 -11 M1768 946 l10 -11 M1780 946 l10 -11 M1792 946 l10 -11 M1804 946 l10 -11 M1816 946 l10 -11 M1828 946 l10 -11 M1840 946 l10 -11 M1852 946 l10 -11 M1864 946 l10 -11 M1876 946 l10 -11 M1888 946 l10 -11 M1900 946 l10 -11 " stroke="#f6b8b8" stroke-width="0.8" fill="none"/><path d="M1130 556 C1150 570 1160 582 1167 594 C1160 607 1150 619 1130 633 L1130 629 C1143 618 1151 607 1154 594 C1151 581 1143 570 1130 560 Z" fill="#0a37c8"/><path d="M1130 594.5 H1155" stroke="#0a37c8" stroke-width="1.2"/><path d="M1150 585 L1167 594 L1150 603 Z" fill="#0a37c8"/><path d="M1475.5 193 V238.5 H1542.5 V193 M1475.5 238.5 L1521 193" stroke="#b4b4b4" stroke-width="1.2" fill="none"/><path d="M1478.5 764.5 H1545.5 V830.5 H1478.5 Z M1478.5 830.5 L1545.5 764.5" stroke="#b4b4b4" stroke-width="1.2" fill="none"/><path d="M1396.5 205 H1414.5" stroke="#b0b0b0" stroke-width="1"/><path d="M1414.5 198.5 L1431.5 205 L1414.5 211.5 Z" fill="#fbe5d3" stroke="#b8b8b8" stroke-width="1"/><path d="M1604.5 205 H1623" stroke="#b0b0b0" stroke-width="1"/><path d="M1604.5 198.5 L1587.5 205 L1604.5 211.5 Z" fill="#fbe5d3" stroke="#b8b8b8" stroke-width="1"/><path d="M1399 797.5 H1416.5" stroke="#b0b0b0" stroke-width="1"/><path d="M1416.5 791.0 L1433.5 797.5 L1416.5 804.0 Z" fill="#fbe5d3" stroke="#b8b8b8" stroke-width="1"/><path d="M1607 797.5 H1625" stroke="#b0b0b0" stroke-width="1"/><path d="M1607 791.0 L1590 797.5 L1607 804.0 Z" fill="#fbe5d3" stroke="#b8b8b8" stroke-width="1"/><rect x="1497.5" y="244.5" width="29" height="476" fill="#ff0000" stroke="#a00000" stroke-width="2"/><path d="M1498 247.5 H1526" stroke="#a00000" stroke-width="1.5"/><rect x="1495" y="745" width="33.5" height="254" fill="#ff0000" stroke="#a00000" stroke-width="2"/><rect x="1434.5" y="261.5" width="64" height="28" fill="#ff0000" stroke="#a00000" stroke-width="2"/><path d="M1442 262 V289 M1487 262 V289 M1442 275 H1487" stroke="#a00000" stroke-width="1.6" fill="none"/><rect x="1526.5" y="261.5" width="62" height="28" fill="#ff0000" stroke="#a00000" stroke-width="2"/><path d="M1537 262 V289 M1582.5 262 V289 M1537 275 H1582" stroke="#a00000" stroke-width="1.6" fill="none"/><rect x="1498.5" y="248.5" width="27" height="60" fill="#ff0000"/><rect x="1434.5" y="722.5" width="154" height="28" fill="#ff0000" stroke="#a00000" stroke-width="2"/><path d="M1442 723 V750 M1479 723 V750 M1442 737 H1479 M1545 723 V750 M1582.5 723 V750 M1545 737 H1582" stroke="#a00000" stroke-width="1.6" fill="none"/><path d="M1497.5 713 L1494 720 V752.5 H1529.5 V720 L1526.5 713 Z" fill="#ff0000" stroke="#a00000" stroke-width="2"/><rect x="1498.5" y="700" width="27" height="18" fill="#ff0000"/><path d="M1497 719.5 H1527 M1495 752 H1529" stroke="#a00000" stroke-width="1.5"/><rect x="1496" y="753" width="31.5" height="10" fill="#ff0000"/><path d="M1511.5 248 V349 M1511.5 380 V416 M1511.5 447 V516 M1511.5 541 V580 M1511.5 611 V716 M1511.5 756 V876 M1511.5 905 V940 M1511.5 962 V997" stroke="#a00000" stroke-width="1.5" fill="none"/><path d="M1130 655.5 H1886" stroke="#111" stroke-width="1.2" stroke-dasharray="69 18 17 18" stroke-dashoffset="-77.5" fill="none"/><path d="M1886.5 193 V997" stroke="#111" stroke-width="1.2" stroke-dasharray="69 18 17 18" stroke-dashoffset="-38" fill="none"/><path d="M1478.5 764.5 H1545.5 M1495 814 L1528.5 781" stroke="#d08080" stroke-width="0.9" fill="none"/><path d="M1509.5 318 V300" stroke="#d9a0a0" stroke-width="1"/><path d="M1503 300 L1509.5 283.5 L1516 300 Z" fill="#f09090" stroke="#d0a0a0" stroke-width="0.8"/><path d="M1511.5 685 V703" stroke="#d9a0a0" stroke-width="1"/><path d="M1505 703 L1511.5 719.5 L1518 703 Z" fill="#f09090" stroke="#d0a0a0" stroke-width="0.8"/><path d="M1505.5 972 V990" stroke="#d9a0a0" stroke-width="1"/><path d="M1499 990 L1505.5 1004 L1512 990 Z" fill="#f09090" stroke="#d0a0a0" stroke-width="0.8"/><rect x="1278.7" y="237.9" width="66.6" height="66.6" fill="none" stroke="#8b0000" stroke-width="2"/><path d="M1278.7 237.9 L1345.3 304.5 M1345.3 237.9 L1278.7 304.5" stroke="#8b0000" stroke-width="1.8"/><path d="M1311.8 256.5 Q1310.3 270.5 1311.8 286.5 M1319.5 256.5 Q1318.0 270.5 1319.5 286.5 M1327.3 256.5 Q1325.8 270.5 1327.3 286.5 M1335.0 256.5 Q1333.5 270.5 1335.0 286.5 M1342.8 256.5 Q1341.3 270.5 1342.8 286.5 M1350.5 256.5 Q1349.0 270.5 1350.5 286.5 M1358.3 256.5 Q1356.8 270.5 1358.3 286.5 M1366.0 256.5 Q1364.5 270.5 1366.0 286.5 M1373.8 256.5 Q1372.3 270.5 1373.8 286.5 M1381.5 256.5 Q1380.0 270.5 1381.5 286.5 M1389.3 256.5 Q1387.8 270.5 1389.3 286.5 M1397.0 256.5 Q1395.5 270.5 1397.0 286.5 M1404.8 256.5 Q1403.3 270.5 1404.8 286.5 M1412.5 256.5 Q1411.0 270.5 1412.5 286.5 M1420.3 256.5 Q1418.8 270.5 1420.3 286.5 M1428.0 256.5 Q1426.5 270.5 1428.0 286.5 " stroke="#8b0000" stroke-width="1.8" fill="none"/><path d="M1311.8 272.5 H1434" stroke="#8b0000" stroke-width="2.2"/><path d="M1244.3 270.5 H1262.3" stroke="#a00000" stroke-width="1.2"/><path d="M1245.3 264.0 L1227.3 270.5 L1245.3 277.0 Z" fill="#ff0000" stroke="#a00000" stroke-width="0.6"/><path d="M1361.8 270.5 H1379.8" stroke="#a00000" stroke-width="1.2"/><path d="M1378.8 264.0 L1396.8 270.5 L1378.8 277.0 Z" fill="#ff0000" stroke="#a00000" stroke-width="0.6"/><path d="M1312.3 221.5 V203.5" stroke="#a00000" stroke-width="1.2"/><path d="M1305.8 204.5 L1312.3 186.5 L1318.8 204.5 Z" fill="#ff0000" stroke="#a00000" stroke-width="0.6"/><path d="M1312.3 321.5 V339.5" stroke="#a00000" stroke-width="1.2"/><path d="M1305.8 338.5 L1312.3 356.5 L1318.8 338.5 Z" fill="#ff0000" stroke="#a00000" stroke-width="0.6"/><rect x="1674.1000000000001" y="237.9" width="66.6" height="66.6" fill="none" stroke="#8b0000" stroke-width="2"/><path d="M1674.1000000000001 237.9 L1740.7 304.5 M1740.7 237.9 L1674.1000000000001 304.5" stroke="#8b0000" stroke-width="1.8"/><path d="M1707.2 256.5 Q1705.7 270.5 1707.2 286.5 M1699.5 256.5 Q1698.0 270.5 1699.5 286.5 M1691.7 256.5 Q1690.2 270.5 1691.7 286.5 M1684.0 256.5 Q1682.5 270.5 1684.0 286.5 M1676.2 256.5 Q1674.7 270.5 1676.2 286.5 M1668.5 256.5 Q1667.0 270.5 1668.5 286.5 M1660.7 256.5 Q1659.2 270.5 1660.7 286.5 M1653.0 256.5 Q1651.5 270.5 1653.0 286.5 M1645.2 256.5 Q1643.7 270.5 1645.2 286.5 M1637.5 256.5 Q1636.0 270.5 1637.5 286.5 M1629.7 256.5 Q1628.2 270.5 1629.7 286.5 M1622.0 256.5 Q1620.5 270.5 1622.0 286.5 M1614.2 256.5 Q1612.7 270.5 1614.2 286.5 M1606.5 256.5 Q1605.0 270.5 1606.5 286.5 M1598.7 256.5 Q1597.2 270.5 1598.7 286.5 " stroke="#8b0000" stroke-width="1.8" fill="none"/><path d="M1707.2 272.5 H1589" stroke="#8b0000" stroke-width="2.2"/><path d="M1756.7 270.5 H1774.7" stroke="#a00000" stroke-width="1.2"/><path d="M1773.7 264.0 L1791.7 270.5 L1773.7 277.0 Z" fill="#ff0000" stroke="#a00000" stroke-width="0.6"/><path d="M1639.2 270.5 H1657.2" stroke="#a00000" stroke-width="1.2"/><path d="M1640.2 264.0 L1622.2 270.5 L1640.2 277.0 Z" fill="#ff0000" stroke="#a00000" stroke-width="0.6"/><path d="M1707.7 221.5 V203.5" stroke="#a00000" stroke-width="1.2"/><path d="M1701.2 204.5 L1707.7 186.5 L1714.2 204.5 Z" fill="#ff0000" stroke="#a00000" stroke-width="0.6"/><path d="M1707.7 321.5 V339.5" stroke="#a00000" stroke-width="1.2"/><path d="M1701.2 338.5 L1707.7 356.5 L1714.2 338.5 Z" fill="#ff0000" stroke="#a00000" stroke-width="0.6"/><rect x="1278.7" y="699.4" width="66.6" height="66.6" fill="none" stroke="#8b0000" stroke-width="2"/><path d="M1278.7 699.4 L1345.3 766.0 M1345.3 699.4 L1278.7 766.0" stroke="#8b0000" stroke-width="1.8"/><path d="M1311.8 718 Q1310.3 732 1311.8 748 M1319.5 718 Q1318.0 732 1319.5 748 M1327.3 718 Q1325.8 732 1327.3 748 M1335.0 718 Q1333.5 732 1335.0 748 M1342.8 718 Q1341.3 732 1342.8 748 M1350.5 718 Q1349.0 732 1350.5 748 M1358.3 718 Q1356.8 732 1358.3 748 M1366.0 718 Q1364.5 732 1366.0 748 M1373.8 718 Q1372.3 732 1373.8 748 M1381.5 718 Q1380.0 732 1381.5 748 M1389.3 718 Q1387.8 732 1389.3 748 M1397.0 718 Q1395.5 732 1397.0 748 M1404.8 718 Q1403.3 732 1404.8 748 M1412.5 718 Q1411.0 732 1412.5 748 M1420.3 718 Q1418.8 732 1420.3 748 M1428.0 718 Q1426.5 732 1428.0 748 " stroke="#8b0000" stroke-width="1.8" fill="none"/><path d="M1311.8 734 H1434" stroke="#8b0000" stroke-width="2.2"/><path d="M1244.3 732 H1262.3" stroke="#a00000" stroke-width="1.2"/><path d="M1245.3 725.5 L1227.3 732 L1245.3 738.5 Z" fill="#ff0000" stroke="#a00000" stroke-width="0.6"/><path d="M1361.8 732 H1379.8" stroke="#a00000" stroke-width="1.2"/><path d="M1378.8 725.5 L1396.8 732 L1378.8 738.5 Z" fill="#ff0000" stroke="#a00000" stroke-width="0.6"/><path d="M1312.3 683 V665" stroke="#a00000" stroke-width="1.2"/><path d="M1305.8 666 L1312.3 648 L1318.8 666 Z" fill="#ff0000" stroke="#a00000" stroke-width="0.6"/><path d="M1312.3 783 V801" stroke="#a00000" stroke-width="1.2"/><path d="M1305.8 800 L1312.3 818 L1318.8 800 Z" fill="#ff0000" stroke="#a00000" stroke-width="0.6"/><rect x="1674.1000000000001" y="699.4" width="66.6" height="66.6" fill="none" stroke="#8b0000" stroke-width="2"/><path d="M1674.1000000000001 699.4 L1740.7 766.0 M1740.7 699.4 L1674.1000000000001 766.0" stroke="#8b0000" stroke-width="1.8"/><path d="M1707.2 718 Q1705.7 732 1707.2 748 M1699.5 718 Q1698.0 732 1699.5 748 M1691.7 718 Q1690.2 732 1691.7 748 M1684.0 718 Q1682.5 732 1684.0 748 M1676.2 718 Q1674.7 732 1676.2 748 M1668.5 718 Q1667.0 732 1668.5 748 M1660.7 718 Q1659.2 732 1660.7 748 M1653.0 718 Q1651.5 732 1653.0 748 M1645.2 718 Q1643.7 732 1645.2 748 M1637.5 718 Q1636.0 732 1637.5 748 M1629.7 718 Q1628.2 732 1629.7 748 M1622.0 718 Q1620.5 732 1622.0 748 M1614.2 718 Q1612.7 732 1614.2 748 M1606.5 718 Q1605.0 732 1606.5 748 M1598.7 718 Q1597.2 732 1598.7 748 " stroke="#8b0000" stroke-width="1.8" fill="none"/><path d="M1707.2 734 H1589" stroke="#8b0000" stroke-width="2.2"/><path d="M1756.7 732 H1774.7" stroke="#a00000" stroke-width="1.2"/><path d="M1773.7 725.5 L1791.7 732 L1773.7 738.5 Z" fill="#ff0000" stroke="#a00000" stroke-width="0.6"/><path d="M1639.2 732 H1657.2" stroke="#a00000" stroke-width="1.2"/><path d="M1640.2 725.5 L1622.2 732 L1640.2 738.5 Z" fill="#ff0000" stroke="#a00000" stroke-width="0.6"/><path d="M1707.7 683 V665" stroke="#a00000" stroke-width="1.2"/><path d="M1701.2 666 L1707.7 648 L1714.2 666 Z" fill="#ff0000" stroke="#a00000" stroke-width="0.6"/><path d="M1707.7 783 V801" stroke="#a00000" stroke-width="1.2"/><path d="M1701.2 800 L1707.7 818 L1714.2 800 Z" fill="#ff0000" stroke="#a00000" stroke-width="0.6"/><rect x="1517" y="251" width="80" height="24" fill="#fff"/><text x="1556" y="246.9" text-anchor="middle" font-size="17.5">4</text><text x="1556.5" y="270.4" text-anchor="middle" font-size="17.5" textLength="77" lengthAdjust="spacingAndGlyphs">200.0 L/s</text><text x="1358" y="312.9" text-anchor="middle" font-size="17.5">2</text><text x="1358.5" y="335.9" text-anchor="middle" font-size="17.5" textLength="76.5" lengthAdjust="spacingAndGlyphs">100.0 L/s</text><text x="1753" y="312.9" text-anchor="middle" font-size="17.5">2</text><text x="1753.5" y="335.9" text-anchor="middle" font-size="17.5" textLength="76.5" lengthAdjust="spacingAndGlyphs">100.0 L/s</text><text x="1358" y="773.9" text-anchor="middle" font-size="17.5">2</text><text x="1358.5" y="796.9" text-anchor="middle" font-size="17.5" textLength="76.5" lengthAdjust="spacingAndGlyphs">100.0 L/s</text><text x="1753" y="773.9" text-anchor="middle" font-size="17.5">2</text><text x="1753.5" y="796.9" text-anchor="middle" font-size="17.5" textLength="76.5" lengthAdjust="spacingAndGlyphs">100.0 L/s</text><text x="1558" y="839.9" text-anchor="middle" font-size="17.5">4</text><path d="M1540.5 845.5 H1575" stroke="#111" stroke-width="1"/><text x="1558" y="862.9" text-anchor="middle" font-size="17.5" textLength="57.5" lengthAdjust="spacingAndGlyphs">0.0 L/s</text><rect x="1502.5" y="431" width="19" height="72" fill="#fff"/><text transform="translate(1518.5 467) rotate(-90)" text-anchor="middle" font-size="17.5" textLength="69" lengthAdjust="spacingAndGlyphs">250x250</text><rect x="1501.5" y="881" width="20.5" height="73" fill="#fff"/><text transform="translate(1518.5 917.5) rotate(-90)" text-anchor="middle" font-size="17.5" textLength="69" lengthAdjust="spacingAndGlyphs">300x300</text></g></svg>
<div style="left:1904px;top:193px;width:16px;height:804px;background:#f0f0f0;"></div>
<svg style="left:1907px;top:201px;" width="10" height="8" viewBox="0 0 10 8"><path d="M1 6 L5 2 L9 6" fill="none" stroke="#333" stroke-width="1.6"/></svg>
<svg style="left:1907px;top:984px;" width="10" height="8" viewBox="0 0 10 8"><path d="M1 2 L5 6 L9 2" fill="none" stroke="#333" stroke-width="1.6"/></svg>
<div style="left:1904px;top:588px;width:16px;height:17px;background:#cdcdcd;"></div>
<div style="left:1130px;top:997px;width:790px;height:17px;background:#f0f0f0;"></div>
<span class="t" style="top:998px;line-height:16px;height:16px;color:#111;letter-spacing:-0.337px;left:1157px;">1 : 50</span>
<svg style="left:1441px;top:1001px;" width="10" height="10" viewBox="0 0 10 10"><path d="M7 1.5 L3 5 L7 8.5" fill="none" stroke="#333" stroke-width="1.6"/></svg>
<svg style="left:1890px;top:1001px;" width="10" height="10" viewBox="0 0 10 10"><path d="M3 1.5 L7 5 L3 8.5" fill="none" stroke="#333" stroke-width="1.6"/></svg>
<div style="left:1454px;top:997px;width:1px;height:17px;background:#dadada;"></div>
<div style="left:1662px;top:998px;width:17px;height:15px;background:#cdcdcd;"></div>
<svg style="left:1909px;top:1004px;" width="9" height="9" viewBox="0 0 9 9"><path d="M6 0 h2 v2 h-2 Z M3 3 h2 v2 h-2 Z M6 3 h2 v2 h-2 Z M0 6 h2 v2 h-2 Z M3 6 h2 v2 h-2 Z M6 6 h2 v2 h-2 Z" fill="#b9b9b9"/></svg>
<svg style="left:1113px;top:1004px;" width="9" height="9" viewBox="0 0 9 9"><path d="M6 0 h2 v2 h-2 Z M3 3 h2 v2 h-2 Z M6 3 h2 v2 h-2 Z M0 6 h2 v2 h-2 Z M3 6 h2 v2 h-2 Z M6 6 h2 v2 h-2 Z" fill="#b9b9b9"/></svg>
<!-- p_vcb -->
<svg style="left:414px;top:999px;" width="16" height="12" viewBox="0 0 16 12"><defs><pattern id="chk414" width="2" height="2" patternUnits="userSpaceOnUse"><rect width="1" height="1" fill="#6a6a6a"/><rect x="1" y="1" width="1" height="1" fill="#6a6a6a"/></pattern></defs><rect x="0.6" y="0.6" width="14.8" height="10.8" fill="#fff"/><rect x="0.6" y="0.6" width="14.8" height="10.8" fill="url(#chk414)" stroke="#2a2a2a" stroke-width="1.2"/></svg>
<svg style="left:435.5px;top:999px;" width="16" height="13" viewBox="0 0 16 13"><path d="M1 5 L4.5 1 H15 V8 L11.5 12 H1 Z" fill="#e9e9ee" stroke="#2a2a2a" stroke-width="1.1" stroke-linejoin="round"/><path d="M1 5 H11.5 L15 1 M11.5 5 V12" fill="none" stroke="#2a2a2a" stroke-width="1"/></svg>
<svg style="left:455.5px;top:997px;" width="16" height="16" viewBox="0 0 16 16"><path d="M6 0.5 V2.5 M6 10.5 V12.5 M0 6.5 H2 M10 6.5 H12 M1.8 2.3 L3.2 3.7 M10.2 2.3 L8.8 3.7 M1.8 10.7 L3.2 9.3" stroke="#e8a200" stroke-width="1.1"/><circle cx="6" cy="6.5" r="3.6" fill="#ffd84a" stroke="#e8a200" stroke-width="0.9"/><path d="M8.5 8.5 L14.5 14.5 M14.5 8.5 L8.5 14.5" stroke="#e0001a" stroke-width="2.2"/></svg>
<svg style="left:478.5px;top:998px;" width="15" height="16" viewBox="0 0 15 16"><circle cx="6" cy="5.5" r="4.6" fill="#dcecfb" stroke="#2f7fd6" stroke-width="1.2"/><path d="M1 12.5 H8" stroke="#2a2a2a" stroke-width="1.6"/><path d="M7.5 8 L13.5 14 M13.5 8 L7.5 14" stroke="#e0001a" stroke-width="2.2"/></svg>
<svg style="left:496.5px;top:998px;" width="17" height="16" viewBox="0 0 17 16"><path d="M1 3 L4 5 C4 9 5.5 10.5 8 10.5 H10 M4.5 3.5 H11 M6.5 3.3 Q7.7 1.2 9 3.3" fill="none" stroke="#555" stroke-width="1.1"/><path d="M12.3 4 C14.4 4 15.8 5.5 15.8 7.3 C15.8 8.8 14.8 9.6 14.4 10.6 V13 H10.3 V10.6 C9.8 9.6 8.8 8.8 8.8 7.3 C8.8 5.5 10.2 4 12.3 4 Z" fill="#eaf4ff" stroke="#2f7fd6" stroke-width="1.3"/><path d="M10.6 14.5 H14" stroke="#2f7fd6" stroke-width="1.2"/></svg>
<svg style="left:517.5px;top:998px;" width="17" height="15" viewBox="0 0 17 15"><path d="M1 8 H3.5 M4 3.5 H14 M4 3.5 V13 M9.5 0.8 V3" stroke="#1f5fae" stroke-width="1.5" fill="none"/><path d="M6.5 6.5 H15 M6.5 6.5 V13" stroke="#1f5fae" stroke-width="1.1" fill="none"/><path d="M8 6 L15 13 M15 6 L8 13" stroke="#e0001a" stroke-width="2.2"/><path d="M4.5 9.5 H7" stroke="#e0001a" stroke-width="1.2"/></svg>
<svg style="left:538.5px;top:998px;" width="17" height="15" viewBox="0 0 17 15"><path d="M1 8 H3.5 M4 3.5 H14 M4 3.5 V13 M9.5 0.8 V3" stroke="#1f5fae" stroke-width="1.5" fill="none"/><path d="M6.5 6.5 H15 M6.5 6.5 V13" stroke="#1f5fae" stroke-width="1.1" fill="none"/><path d="M12.6 3.2 C14.5 3.2 15.6 4.6 15.6 6.2 C15.6 7.6 14.8 8.3 14.5 9.2 V11.2 H10.7 V9.2 C10.4 8.3 9.6 7.6 9.6 6.2 C9.6 4.6 10.7 3.2 12.6 3.2 Z" fill="#eaf4ff" stroke="#2f7fd6" stroke-width="1.2"/><path d="M11 12.8 H14.2" stroke="#2f7fd6" stroke-width="1.1"/><path d="M7.5 9.5 H9.5" stroke="#e0001a" stroke-width="1.2"/></svg>
<svg style="left:559.5px;top:997px;" width="16" height="18" viewBox="0 0 16 18"><path d="M1 7 L7 1.5 L14.5 6 V9 M2.5 6 V14.5 H8 M7 1.5 L9 7.5 L14.5 6 M9 7.5 V9" fill="#f4f4f4" stroke="#444" stroke-width="1.1" stroke-linejoin="round"/><rect x="4" y="9.5" width="2.4" height="5" fill="#666"/><rect x="9" y="11.5" width="6" height="5" fill="#dff3ee" stroke="#1f8a7a" stroke-width="1.2"/><path d="M10.3 11.5 V10 Q10.3 8.3 12 8.3 Q13.7 8.3 13.7 10" fill="none" stroke="#1f8a7a" stroke-width="1.2"/></svg>
<svg style="left:580.5px;top:999px;" width="17" height="13" viewBox="0 0 17 13"><path d="M0.8 2.2 L3.5 6.8 Q5 9.5 7.2 8.2 L9.2 6.2 Q10 5.4 10.8 6.2" fill="none" stroke="#3a3a3a" stroke-width="1.2"/><path d="M6 3.2 Q8 0.8 12 1.8 Q15.5 3 15.8 5.5 Q15.5 9 12.5 9.8 Q9.5 10 8.5 8" fill="none" stroke="#3a3a3a" stroke-width="1.2"/><path d="M3.8 7 Q5 10.5 7.5 8.5" fill="#dcecfb" stroke="#2f7fd6" stroke-width="0.9"/><path d="M9.5 7 Q10.5 10.2 13 9.6 Q15 8.5 14.8 6" fill="#dcecfb" stroke="#2f7fd6" stroke-width="0.9"/></svg>
<svg style="left:606px;top:999px;" width="8" height="14" viewBox="0 0 8 14"><path d="M3.8 1 C5.8 1 6.9 2.4 6.9 4 C6.9 5.4 6.1 6 5.8 7 V9 H1.8 V7 C1.5 6 0.7 5.4 0.7 4 C0.7 2.4 1.8 1 3.8 1 Z" fill="#eaf4ff" stroke="#2f7fd6" stroke-width="1.3"/><path d="M2.2 10.6 H5.4 M2.8 12 H4.8" stroke="#2f7fd6" stroke-width="1.1"/></svg>
<svg style="left:623px;top:999px;" width="16" height="14" viewBox="0 0 16 14"><path d="M1 3 H14 V12.5 H1 Z" fill="none" stroke="#2a2a2a" stroke-width="1.5" stroke-dasharray="3 1.6"/><path d="M3 1 V3 M6.5 1 V3" stroke="#2a2a2a" stroke-width="1.3"/><rect x="7.5" y="6.5" width="7" height="6" fill="#fff" stroke="#2a2a2a" stroke-width="1.1"/><circle cx="11" cy="9.5" r="1.6" fill="none" stroke="#2a2a2a" stroke-width="1"/></svg>
<svg style="left:643px;top:998px;" width="18" height="16" viewBox="0 0 18 16"><path d="M1 14 V7 L6 2 L11 5 V14 M6 2 V14 M3.5 4.5 V14 M8.5 3.5 V14 M1 7 L11 5 M1 10.5 H11" fill="none" stroke="#4a4a4a" stroke-width="1"/><path d="M3 14 V9.5 H9 V14" fill="none" stroke="#e0001a" stroke-width="1.4"/><circle cx="13.5" cy="6.5" r="3.6" fill="#ffc744" stroke="#f0a000" stroke-width="0.8"/><path d="M12 10.2 V12.8 H15 V10.2" fill="#fff5d8" stroke="#8a8a8a" stroke-width="0.8"/></svg>
<svg style="left:665.5px;top:999px;" width="16" height="14" viewBox="0 0 16 14"><path d="M1 5 L4 2 H14.5 V10 L11.5 13 H1 Z M1 5 H11.5 L14.5 2 M11.5 5 V13" fill="#f2f2f2" stroke="#555" stroke-width="1" stroke-linejoin="round"/><path d="M3.5 5 V13 M6 5 V13 M8.5 5 V13 M1 7.7 H11.5 M1 10.3 H11.5" stroke="#777" stroke-width="0.8"/></svg>
<svg style="left:685.5px;top:997px;" width="17" height="17" viewBox="0 0 17 17"><path d="M1.5 1 V7 M15.5 1 V7 M1.5 3.5 H15.5" fill="none" stroke="#2a2a2a" stroke-width="1.1"/><path d="M1.5 8 V14 M1.5 11.5 H8" fill="none" stroke="#2a2a2a" stroke-width="1" stroke-dasharray="2 1.5"/><rect x="9" y="9.5" width="7" height="5.5" fill="#bdbdbd" stroke="#444" stroke-width="1"/><path d="M10.5 9.5 V8.3 Q10.5 6.6 12.5 6.6 Q14.5 6.6 14.5 8.3 V9.5" fill="none" stroke="#444" stroke-width="1.1"/></svg>
<svg style="left:1209px;top:999px;" width="16" height="12" viewBox="0 0 16 12"><rect x="0.6" y="0.6" width="14.8" height="10.8" fill="#fff" stroke="#2a2a2a" stroke-width="1.2"/><path d="M1 1 h4.6 v3 h-4.6 Z M10.4 1 h4.6 v3 h-4.6 Z M5.6 4 h4.8 v3.5 h-4.8 Z M1 7.5 h4.6 v3.5 h-4.6 Z M10.4 7.5 h4.6 v3.5 h-4.6 Z" fill="#555"/><path d="M5.6 1 h4.8 v3 h-4.8 Z M1 4 h4.6 v3.5 h-4.6 Z M10.4 4 h4.6 v3.5 h-4.6Z M5.6 7.5 h4.8 v3.5 h-4.8 Z" fill="#cfcfcf"/></svg>
<svg style="left:1230.5px;top:999px;" width="16" height="13" viewBox="0 0 16 13"><path d="M1 5 L4.5 1 H15 V8 L11.5 12 H1 Z" fill="#e9e9ee" stroke="#2a2a2a" stroke-width="1.1" stroke-linejoin="round"/><path d="M1 5 H11.5 L15 1 M11.5 5 V12" fill="none" stroke="#2a2a2a" stroke-width="1"/></svg>
<svg style="left:1250.5px;top:997px;" width="16" height="16" viewBox="0 0 16 16"><path d="M6 0.5 V2.5 M6 10.5 V12.5 M0 6.5 H2 M10 6.5 H12 M1.8 2.3 L3.2 3.7 M10.2 2.3 L8.8 3.7 M1.8 10.7 L3.2 9.3" stroke="#e8a200" stroke-width="1.1"/><circle cx="6" cy="6.5" r="3.6" fill="#ffd84a" stroke="#e8a200" stroke-width="0.9"/><path d="M8.5 8.5 L14.5 14.5 M14.5 8.5 L8.5 14.5" stroke="#e0001a" stroke-width="2.2"/></svg>
<svg style="left:1273px;top:998px;" width="15" height="16" viewBox="0 0 15 16"><circle cx="6" cy="5.5" r="4.6" fill="#dcecfb" stroke="#2f7fd6" stroke-width="1.2"/><path d="M1 12.5 H8" stroke="#2a2a2a" stroke-width="1.6"/><path d="M7.5 8 L13.5 14 M13.5 8 L7.5 14" stroke="#e0001a" stroke-width="2.2"/></svg>
<svg style="left:1291.5px;top:998px;" width="17" height="15" viewBox="0 0 17 15"><path d="M1 8 H3.5 M4 3.5 H14 M4 3.5 V13 M9.5 0.8 V3" stroke="#1f5fae" stroke-width="1.5" fill="none"/><path d="M6.5 6.5 H15 M6.5 6.5 V13" stroke="#1f5fae" stroke-width="1.1" fill="none"/><path d="M8 6 L15 13 M15 6 L8 13" stroke="#e0001a" stroke-width="2.2"/><path d="M4.5 9.5 H7" stroke="#e0001a" stroke-width="1.2"/></svg>
<svg style="left:1312.5px;top:998px;" width="17" height="15" viewBox="0 0 17 15"><path d="M1 8 H3.5 M4 3.5 H14 M4 3.5 V13 M9.5 0.8 V3" stroke="#1f5fae" stroke-width="1.5" fill="none"/><path d="M6.5 6.5 H15 M6.5 6.5 V13" stroke="#1f5fae" stroke-width="1.1" fill="none"/><path d="M12.6 3.2 C14.5 3.2 15.6 4.6 15.6 6.2 C15.6 7.6 14.8 8.3 14.5 9.2 V11.2 H10.7 V9.2 C10.4 8.3 9.6 7.6 9.6 6.2 C9.6 4.6 10.7 3.2 12.6 3.2 Z" fill="#eaf4ff" stroke="#2f7fd6" stroke-width="1.2"/><path d="M11 12.8 H14.2" stroke="#2f7fd6" stroke-width="1.1"/><path d="M7.5 9.5 H9.5" stroke="#e0001a" stroke-width="1.2"/></svg>
<svg style="left:1333.5px;top:999px;" width="17" height="13" viewBox="0 0 17 13"><path d="M0.8 2.2 L3.5 6.8 Q5 9.5 7.2 8.2 L9.2 6.2 Q10 5.4 10.8 6.2" fill="none" stroke="#3a3a3a" stroke-width="1.2"/><path d="M6 3.2 Q8 0.8 12 1.8 Q15.5 3 15.8 5.5 Q15.5 9 12.5 9.8 Q9.5 10 8.5 8" fill="none" stroke="#3a3a3a" stroke-width="1.2"/><path d="M3.8 7 Q5 10.5 7.5 8.5" fill="#dcecfb" stroke="#2f7fd6" stroke-width="0.9"/><path d="M9.5 7 Q10.5 10.2 13 9.6 Q15 8.5 14.8 6" fill="#dcecfb" stroke="#2f7fd6" stroke-width="0.9"/></svg>
<svg style="left:1359.5px;top:999px;" width="8" height="14" viewBox="0 0 8 14"><path d="M3.8 1 C5.8 1 6.9 2.4 6.9 4 C6.9 5.4 6.1 6 5.8 7 V9 H1.8 V7 C1.5 6 0.7 5.4 0.7 4 C0.7 2.4 1.8 1 3.8 1 Z" fill="#eaf4ff" stroke="#2f7fd6" stroke-width="1.3"/><path d="M2.2 10.6 H5.4 M2.8 12 H4.8" stroke="#2f7fd6" stroke-width="1.1"/></svg>
<svg style="left:1376.5px;top:999px;" width="16" height="14" viewBox="0 0 16 14"><path d="M1 3 H14 V12.5 H1 Z" fill="none" stroke="#2a2a2a" stroke-width="1.5" stroke-dasharray="3 1.6"/><path d="M3 1 V3 M6.5 1 V3" stroke="#2a2a2a" stroke-width="1.3"/><rect x="7.5" y="6.5" width="7" height="6" fill="#fff" stroke="#2a2a2a" stroke-width="1.1"/><circle cx="11" cy="9.5" r="1.6" fill="none" stroke="#2a2a2a" stroke-width="1"/></svg>
<svg style="left:1396.5px;top:998px;" width="18" height="16" viewBox="0 0 18 16"><path d="M1 14 V7 L6 2 L11 5 V14 M6 2 V14 M3.5 4.5 V14 M8.5 3.5 V14 M1 7 L11 5 M1 10.5 H11" fill="none" stroke="#4a4a4a" stroke-width="1"/><path d="M3 14 V9.5 H9 V14" fill="none" stroke="#e0001a" stroke-width="1.4"/><circle cx="13.5" cy="6.5" r="3.6" fill="#ffc744" stroke="#f0a000" stroke-width="0.8"/><path d="M12 10.2 V12.8 H15 V10.2" fill="#fff5d8" stroke="#8a8a8a" stroke-width="0.8"/></svg>
<svg style="left:1418px;top:997px;" width="17" height="17" viewBox="0 0 17 17"><path d="M1.5 1 V7 M15.5 1 V7 M1.5 3.5 H15.5" fill="none" stroke="#2a2a2a" stroke-width="1.1"/><path d="M1.5 8 V14 M1.5 11.5 H8" fill="none" stroke="#2a2a2a" stroke-width="1" stroke-dasharray="2 1.5"/><rect x="9" y="9.5" width="7" height="5.5" fill="#bdbdbd" stroke="#444" stroke-width="1"/><path d="M10.5 9.5 V8.3 Q10.5 6.6 12.5 6.6 Q14.5 6.6 14.5 8.3 V9.5" fill="none" stroke="#444" stroke-width="1.1"/></svg>
<!-- p_status -->
<div style="left:0px;top:1016px;width:1920px;height:25px;background:#cdcdcd;"></div>
<div style="left:0px;top:1040px;width:1920px;height:1px;background:#161616;"></div>
<span class="t" style="top:1021px;line-height:16px;height:16px;color:#111;letter-spacing:-0.276px;left:3px;">Click to select, TAB for alternates, CTRL adds, SHIFT unselects.</span>
<div style="left:897px;top:1018px;width:1px;height:21px;background:#dcdcdc;"></div>
<svg style="left:904px;top:1020px;" width="19" height="18" viewBox="0 0 19 18"><path d="M6 4 L9.5 2 L13 4 V9 L9.5 11 L6 9 Z" fill="#bdbdbd" stroke="#8a8a8a" stroke-width="1"/><path d="M1 8 L4.5 6 L8 8 V15 L4.5 17 L1 15 Z M10.5 8 L14 6 L17.5 8 V15 L14 17 L10.5 15 Z" fill="#d8d8d8" stroke="#8a8a8a" stroke-width="1"/><path d="M6 4 L9.5 6 L13 4 M1 8 L4.5 10 L8 8 M10.5 8 L14 10 L17.5 8" fill="none" stroke="#f0f0f0" stroke-width="0.9"/></svg>
<div style="left:929px;top:1020px;width:204px;height:18px;background:#fff;"></div>
<svg style="left:1118px;top:1026px;" width="12" height="8" viewBox="0 0 12 8"><path d="M1 1.5 L5.5 6 L10 1.5" fill="none" stroke="#8a8a8a" stroke-width="1.1"/></svg>
<svg style="left:1142px;top:1020px;" width="17" height="18" viewBox="0 0 17 18"><rect x="3.5" y="1.5" width="11" height="5" rx="1" fill="#c9c9c9" stroke="#9b9b9b" stroke-width="1.1"/><path d="M14.5 4 H16 V8.5 L8 10 V12" fill="none" stroke="#9b9b9b" stroke-width="1.2"/><path d="M6 7 L2 16.5 H8.5 L9.2 12 Z" fill="#9b9b9b"/></svg>
<span class="t" style="top:1021px;line-height:16px;height:16px;color:#111;letter-spacing:-0.504px;left:1162px;">:0</span>
<div style="left:1195px;top:1021px;width:16px;height:16px;background:#b2b2b2;border-radius:1.5px;"></div>
<svg style="left:1220px;top:1020px;" width="18" height="18" viewBox="0 0 18 18"><rect x="3" y="1.5" width="13.5" height="13.5" fill="#b2b2b2"/><path d="M1 11 H8 M5.5 8 L8.5 11 L5.5 14 M3 16.5 H16.5 V13" fill="none" stroke="#8a8a8a" stroke-width="1.2"/><path d="M1 11 H8 M5.5 8 L8.5 11 L5.5 14" fill="none" stroke="#e4e4e4" stroke-width="0.9"/></svg>
<div style="left:1245px;top:1020px;width:204px;height:18px;background:#fff;"></div>
<span class="t" style="top:1021px;line-height:16px;height:16px;color:#8a8a8a;letter-spacing:0.197px;left:1247px;">Main Model</span>
<div style="left:1431px;top:1021px;width:1px;height:16px;background:#ededed;"></div>
<svg style="left:1435px;top:1026px;" width="12" height="8" viewBox="0 0 12 8"><path d="M1 1.5 L5.5 6 L10 1.5" fill="none" stroke="#8a8a8a" stroke-width="1.1"/></svg>
<svg style="left:1676px;top:1021px;" width="17" height="16" viewBox="0 0 17 16"><path d="M1 3 Q1 1 3.5 1 H13 Q16 1 16 3.5 Q16 6 13 6 H10.5 V11 H12 V15 H7 V11 H8 V6 H3.5 Q1 6 1 3 Z" fill="#9b9b9b"/><path d="M3 3.2 H6" stroke="#ddd" stroke-width="1"/></svg>
<svg style="left:1701px;top:1021px;" width="18" height="16" viewBox="0 0 18 16"><path d="M1 12 L9 2 H16 V15 H1 Z" fill="#9b9b9b"/><path d="M12 9 L16.5 6 V12 Z M4 15 H8" fill="#cdcdcd" stroke="#cdcdcd" stroke-width="0.6"/></svg>
<svg style="left:1727px;top:1021px;" width="18" height="16" viewBox="0 0 18 16"><path d="M3 1 H10 L12 6 L16 11 V15 H3 V8 H1 V4 H3 Z" fill="#9b9b9b"/><path d="M5 3.5 H8 M6 12 V15 M10 12.5 H12" stroke="#d8d8d8" stroke-width="1"/></svg>
<svg style="left:1754px;top:1021px;" width="17" height="16" viewBox="0 0 17 16"><path d="M2 5 L5 1 H10 V8 L15 12 V15 H1 V8 Z" fill="#9b9b9b"/><path d="M8 15 H11" stroke="#d8d8d8" stroke-width="1.2"/></svg>
<svg style="left:1780px;top:1021px;" width="18" height="17" viewBox="0 0 18 17"><path d="M1 4 L9 9 M4 1 L7 6 M1.5 7.5 L6 4" stroke="#a6a6a6" stroke-width="1" stroke-dasharray="1.5 1"/><path d="M9.5 6.5 L15.5 12.5 L13 12.7 L14.5 15.8 L13 16.5 L11.6 13.5 L9.7 15 Z" fill="#f1f1f1" stroke="#9a9a9a" stroke-width="0.9"/></svg>
<svg style="left:1806px;top:1021px;" width="16" height="16" viewBox="0 0 16 16"><circle cx="8" cy="8" r="5.6" fill="none" stroke="#b3b3b3" stroke-width="2.6" stroke-dasharray="2.2 2.2"/></svg>
<svg style="left:1828px;top:1020px;" width="18" height="18" viewBox="0 0 18 18"><defs><linearGradient id="fng" x1="0" y1="0" x2="1" y2="0"><stop offset="0" stop-color="#7f8a93"/><stop offset="0.45" stop-color="#f2f5f7"/><stop offset="1" stop-color="#7f8a93"/></linearGradient></defs><path d="M1 2.5 H17 L10.5 10 V15.5 Q9 16.8 7.5 15.5 V10 Z" fill="url(#fng)" stroke="#5f6a73" stroke-width="1"/><ellipse cx="9" cy="2.6" rx="8" ry="1.5" fill="#e4e8ea" stroke="#5f6a73" stroke-width="0.9"/></svg>
<span class="t" style="top:1021px;line-height:16px;height:16px;color:#111;letter-spacing:-0.504px;left:1846px;">:0</span>
<!-- p_dialog -->
<div style="left:237px;top:121px;width:585px;height:727px;background:#ffffff;border:1px solid #2f8be0;box-shadow:0 6px 22px rgba(0,0,0,0.38), 0 0 8px rgba(0,0,0,0.18);"></div>
<svg style="left:246px;top:127px;" width="16" height="16" viewBox="0 0 16 16"><defs><linearGradient id="rdg" x1="0" y1="0" x2="1" y2="1"><stop offset="0" stop-color="#2c63b5"/><stop offset="0.6" stop-color="#1f5aa8"/><stop offset="1" stop-color="#49b0e6"/></linearGradient></defs><rect x="0" y="0" width="16" height="16" fill="#dde8f5"/><text x="3" y="14.6" font-family="Liberation Sans, sans-serif" font-weight="bold" font-size="17" fill="url(#rdg)" textLength="11" lengthAdjust="spacingAndGlyphs">R</text></svg>
<span class="t" style="top:128px;line-height:16px;height:16px;color:#000;letter-spacing:-0.240px;left:267px;">View Set Manager</span>
<svg style="left:700px;top:129px;" width="110" height="14" viewBox="0 0 110 14"><path d="M2 7.5 H12" stroke="#111" stroke-width="1"/><rect x="47.5" y="2.5" width="9" height="9" fill="none" stroke="#111"/><path d="M93 2 L103 12 M103 2 L93 12" stroke="#111" stroke-width="1.1"/></svg>
<svg style="left:249px;top:156px;" width="16" height="16" viewBox="0 0 16 16"><path d="M0.7 1.4 L3.9 0.4 L4.7 14.7 L1.7 13.3 Z" fill="#f6e392" stroke="#c9a63a" stroke-width="0.7" stroke-linejoin="round"/><path d="M3.9 0.9 L9.6 1.8 L11 12.6 L4.7 14.7 Z" fill="#e9cb58" stroke="#c9a63a" stroke-width="0.7" stroke-linejoin="round"/><path d="M9.2 8.3 L10.2 8.2 L10.7 12 L9.7 12.3 Z" fill="#fffbe8"/><path d="M13 1.6 C12.6 4 11 5.2 8.8 5.5" fill="none" stroke="#2f97e8" stroke-width="1.5"/><path d="M5.8 5.6 L9.2 3.4 L9.4 7.6 Z" fill="#2f97e8"/></svg>
<svg style="left:275px;top:156px;" width="16" height="16" viewBox="0 0 16 16"><path d="M0.7 1.4 L3.9 0.4 L4.7 14.7 L1.7 13.3 Z" fill="#f6e392" stroke="#c9a63a" stroke-width="0.7" stroke-linejoin="round"/><path d="M3.9 0.9 L9.6 1.8 L11 12.6 L4.7 14.7 Z" fill="#e9cb58" stroke="#c9a63a" stroke-width="0.7" stroke-linejoin="round"/><path d="M9.2 8.3 L10.2 8.2 L10.7 12 L9.7 12.3 Z" fill="#fffbe8"/><path d="M6.8 3.8 C7.4 6 9.2 7 11.4 7.2" fill="none" stroke="#2f97e8" stroke-width="1.5"/><path d="M14.4 7.4 L11 5.2 L10.9 9.4 Z" fill="#2f97e8"/></svg>
<div style="left:238px;top:177px;width:583px;height:2px;background:#bdbdbd;"></div>
<div style="left:273px;top:213px;width:543px;height:27px;background:#0000ff;"></div>
<span class="t" style="top:191px;line-height:16px;height:16px;color:#111;letter-spacing:-0.226px;left:278px;">One View</span>
<span class="t" style="top:219px;line-height:16px;height:16px;color:#fff;letter-spacing:-0.237px;left:278px;">Two Views</span>
<span class="t" style="top:247px;line-height:16px;height:16px;color:#111;letter-spacing:-0.316px;left:278px;">Three Views</span>
<span class="t" style="top:275px;line-height:16px;height:16px;color:#111;letter-spacing:-0.280px;left:278px;">Four Views</span>
<span class="t" style="top:303px;line-height:16px;height:16px;color:#111;letter-spacing:-0.380px;left:278px;">Five Views</span>
<svg style="left:246px;top:217px;" width="22" height="18" viewBox="0 0 22 18"><defs><linearGradient id="flg" x1="0" y1="0" x2="1" y2="0"><stop offset="0" stop-color="#ffd23c"/><stop offset="0.45" stop-color="#ff9a1e"/><stop offset="0.8" stop-color="#ee4a1c"/><stop offset="1" stop-color="#e3200f"/></linearGradient></defs>
<path d="M0.5 8.6 L5 7.2 L3.8 6.2 L7 5.2 L5.2 3.6 L9 3.6 L10 2 L13 2.6 L15.5 1.6 C19.5 2.6 21.5 6 20.8 9.4 C20.2 12.6 17.8 14.6 15 15.6 L12.6 14.8 L10.2 15.6 L9.6 14.2 L6 14 L7.4 12.8 L3.4 12.2 L5.6 11 L2 10.6 L4.4 9.4 Z" fill="url(#flg)"/>
<path d="M4 8.4 L11 7.6 M5 10.4 L12 9.8 M6.4 12.4 L12 11.6 M8 5.6 L12 5.8" stroke="#fff" stroke-opacity="0.55" stroke-width="0.7"/></svg>
<span class="t" style="top:334px;line-height:16px;height:16px;color:#111;letter-spacing:-0.188px;left:248px;">Set Name:</span>
<div style="left:310px;top:329px;width:488px;height:26px;background:#fff;border:1px solid #ababab;"></div>
<span class="t" style="top:333px;line-height:16px;height:16px;color:#111;letter-spacing:-0.053px;left:315px;">Default 3D + Level 3</span>
<svg style="left:782px;top:339px;" width="9" height="6" viewBox="0 0 9 6"><path d="M1 1 L4.5 4.5 L8 1" fill="none" stroke="#444" stroke-width="1"/></svg>
<div style="left:800px;top:334px;width:16px;height:16px;background:#fff;border:1px solid #111;"></div>
<svg style="left:800px;top:334px;" width="16" height="16" viewBox="0 0 16 16"><path d="M3 3 L13 13 M13 3 L3 13" stroke="#111" stroke-width="1.4"/></svg>
<div style="left:249px;top:361px;width:13px;height:13px;background:#fff;border:1px solid #222;"></div>
<svg style="left:249px;top:361px;" width="13" height="13" viewBox="0 0 13 13"><path d="M2.8 6.5 L5.4 9.2 L10.2 3.2" fill="none" stroke="#111" stroke-width="1.5"/></svg>
<span class="t" style="top:360px;line-height:16px;height:16px;color:#111;letter-spacing:-0.245px;left:268px;">Synchronize Views</span>
<span class="t" style="top:386px;line-height:16px;height:16px;color:#111;letter-spacing:-0.195px;left:243px;">Layout:</span>
<div style="left:243px;top:411px;width:282px;height:368px;background:#66adea;border:1px solid #111;border-right:1px solid #2a3440;"></div>
<div style="left:534px;top:411px;width:282px;height:368px;background:#66adea;border:1px solid #111;"></div>
<div style="left:248px;top:584px;width:272px;height:22px;background:#e5e5e5;border:1px solid #adadad;background:linear-gradient(#f1f1f1,#e2e2e2);"></div>
<span class="t" style="top:588px;line-height:16px;height:16px;color:#111;letter-spacing:-0.192px;left:254px;">3D View: {3D}</span>
<svg style="left:505px;top:592px;" width="9" height="6" viewBox="0 0 9 6"><path d="M1 1 L4.5 4.5 L8 1" fill="none" stroke="#444" stroke-width="1"/></svg>
<div style="left:541px;top:584px;width:270px;height:22px;background:#e5e5e5;border:1px solid #adadad;background:linear-gradient(#f1f1f1,#e2e2e2);"></div>
<span class="t" style="top:588px;line-height:16px;height:16px;color:#111;letter-spacing:-0.317px;left:547px;">Floor Plan: Level 3 HVAC Plan</span>
<svg style="left:796px;top:592px;" width="9" height="6" viewBox="0 0 9 6"><path d="M1 1 L4.5 4.5 L8 1" fill="none" stroke="#444" stroke-width="1"/></svg>
<div style="left:500px;top:789px;width:72px;height:21px;background:#f4f4f4;border:1px solid #bfbfbf;"></div>
<span class="t" style="top:792px;line-height:16px;height:16px;color:#9a9a9a;letter-spacing:0.306px;left:490px;">Isolate+Select</span>
<div style="left:582px;top:789px;width:85px;height:21px;background:#e1e1e1;border:1px solid #6a6a6a;"></div>
<span class="t" style="top:792px;line-height:16px;height:16px;color:#111;letter-spacing:-0.336px;left:610px;">Close</span>
<span class="t" style="top:823px;line-height:16px;height:16px;color:#111;font-style:italic;letter-spacing:-0.346px;left:759px;">Ver. 3.0.0.0</span>
<!-- p_dropdown -->
<div style="left:248px;top:606px;width:277px;height:361px;background:#ffffff;border:1px solid #8c8c8c;box-shadow:3px 3px 6px rgba(0,0,0,0.35);"></div>
<div style="left:508px;top:607px;width:16px;height:359px;background:#f0f0f0;"></div>
<svg style="left:511px;top:612px;" width="10" height="8" viewBox="0 0 10 8"><path d="M1 6 L5 2 L9 6" fill="none" stroke="#606060" stroke-width="1.3"/></svg>
<svg style="left:511px;top:953px;" width="10" height="8" viewBox="0 0 10 8"><path d="M1 2 L5 6 L9 2" fill="none" stroke="#606060" stroke-width="1.3"/></svg>
<div style="left:508px;top:769px;width:16px;height:58px;background:#cdcdcd;"></div>
<div style="left:249px;top:768px;width:258px;height:20px;background:#cbe8f6;border:1px solid #26a0da;"></div>
<span class="t" style="top:609.5px;line-height:16px;height:16px;color:#111;letter-spacing:-0.259px;left:254px;">Floor Plan: Level 1 Power Plan</span>
<span class="t" style="top:629.5px;line-height:16px;height:16px;color:#111;letter-spacing:-0.295px;left:254px;">Floor Plan: Level 1 Power Plan_A</span>
<span class="t" style="top:649.5px;line-height:16px;height:16px;color:#111;letter-spacing:-0.326px;left:254px;">Floor Plan: Level 1 Power Plan_B</span>
<span class="t" style="top:669.5px;line-height:16px;height:16px;color:#111;letter-spacing:-0.316px;left:254px;">Floor Plan: Level 1 Power Plan_C</span>
<span class="t" style="top:689.5px;line-height:16px;height:16px;color:#111;letter-spacing:-0.266px;left:254px;">Floor Plan: Level 2</span>
<span class="t" style="top:709.5px;line-height:16px;height:16px;color:#111;letter-spacing:-0.117px;left:254px;">Floor Plan: Level 2 - Lighting Plan</span>
<span class="t" style="top:729.5px;line-height:16px;height:16px;color:#111;letter-spacing:-0.222px;left:254px;">Floor Plan: Level 2 - Power Plan</span>
<span class="t" style="top:749.5px;line-height:16px;height:16px;color:#111;letter-spacing:-0.159px;left:254px;">Floor Plan: Level 2 Fire Protection Piping Plan</span>
<span class="t" style="top:769.5px;line-height:16px;height:16px;color:#111;letter-spacing:-0.241px;left:254px;">Floor Plan: Level 2 HVAC Duct Plan</span>
<span class="t" style="top:789.5px;line-height:16px;height:16px;color:#111;letter-spacing:-0.281px;left:254px;">Floor Plan: Level 2 HVAC Pipe Plan</span>
<span class="t" style="top:809.5px;line-height:16px;height:16px;color:#111;letter-spacing:-0.283px;left:254px;">Floor Plan: Level 2 HVAC Plan</span>
<span class="t" style="top:829.5px;line-height:16px;height:16px;color:#111;letter-spacing:-0.261px;left:254px;">Floor Plan: Level 2 HVAC Zone Plan</span>
<span class="t" style="top:849px;line-height:16px;height:16px;color:#111;letter-spacing:-0.145px;left:254px;">Floor Plan: Level 2 Lighting Plan</span>
<span class="t" style="top:868.5px;line-height:16px;height:16px;color:#111;letter-spacing:-0.197px;left:254px;">Floor Plan: Level 2 Piping Plan</span>
<span class="t" style="top:888.5px;line-height:16px;height:16px;color:#111;letter-spacing:-0.175px;left:254px;">Floor Plan: Level 2 Plumbing Plan</span>
<span class="t" style="top:908.5px;line-height:16px;height:16px;color:#111;letter-spacing:-0.259px;left:254px;">Floor Plan: Level 2 Power Plan</span>
<span class="t" style="top:928.5px;line-height:16px;height:16px;color:#111;letter-spacing:-0.117px;left:254px;">Floor Plan: Level 3 - Lighting Plan</span>
<span class="t" style="top:948.5px;line-height:16px;height:16px;color:#111;letter-spacing:-0.222px;left:254px;">Floor Plan: Level 3 - Power Plan</span>
</div>
</body></html>
